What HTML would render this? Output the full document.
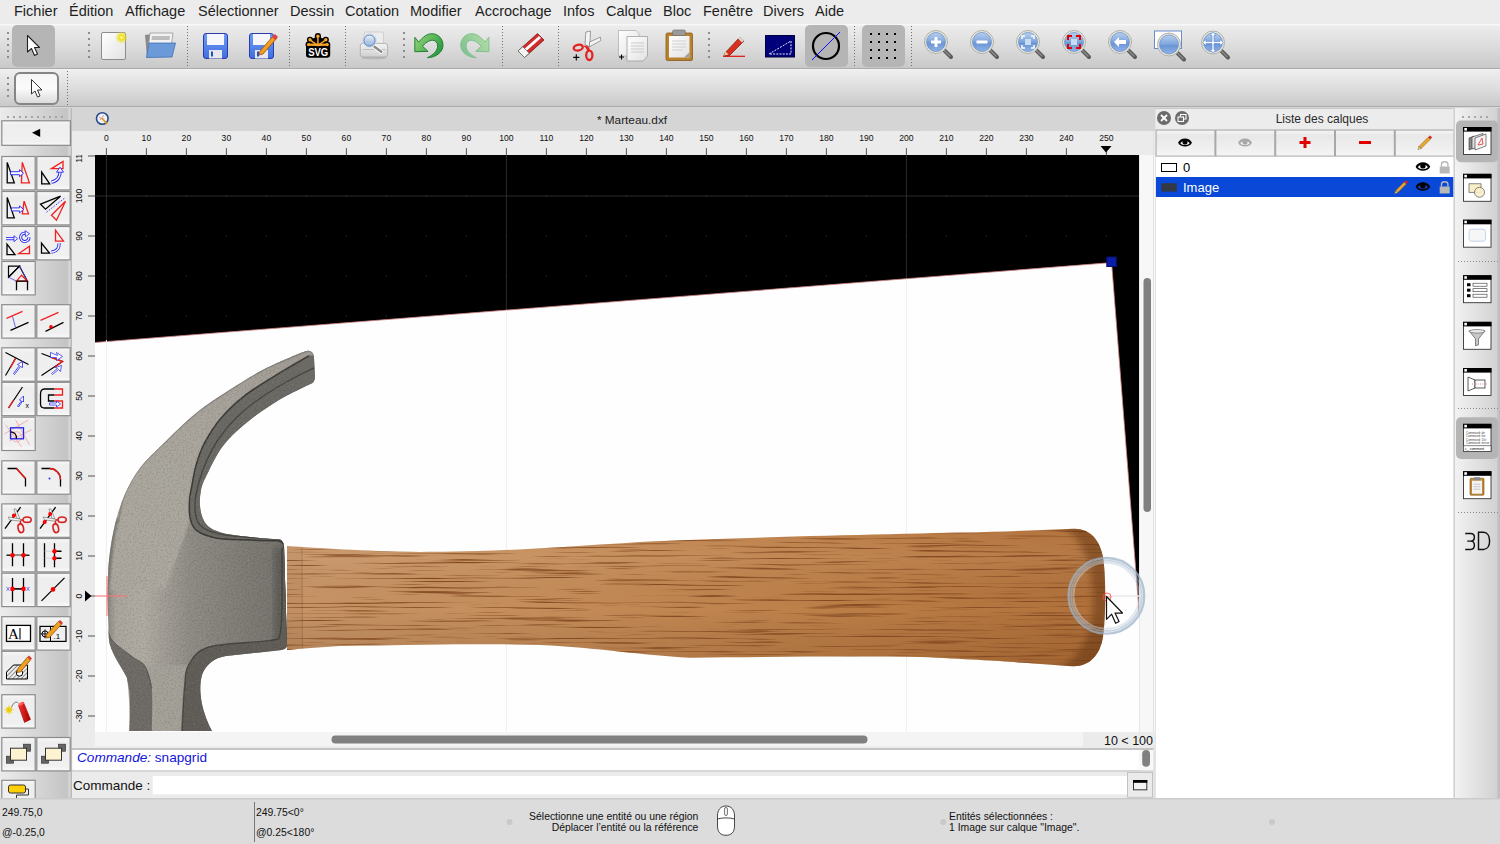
<!DOCTYPE html>
<html><head><meta charset="utf-8">
<style>
*{margin:0;padding:0;box-sizing:border-box}
html,body{width:1500px;height:844px;overflow:hidden;background:#e6e6e6;font-family:"Liberation Sans",sans-serif;color:#000}
.a{position:absolute}
#menu{left:0;top:0;width:1500px;height:24px;background:#ececec}
#menu span{position:absolute;top:3px;font-size:14.5px;color:#1e1e1e}
#tb1{left:0;top:24px;width:1500px;height:44.5px;background:linear-gradient(#f7f7f7 0,#f7f7f7 1px,#ececec 2px,#dcdcdc 50%,#c9c9c9 calc(100% - 1.5px),#ababab calc(100% - 1px),#ababab 100%)}
#tb2{left:0;top:68.5px;width:1500px;height:39.5px;background:linear-gradient(#f4f4f4 0,#eeeeee 1.5px,#dddddd 50%,#cacaca calc(100% - 2.5px),#a9a9a9 calc(100% - 2px),#a9a9a9 calc(100% - 1px),#d8d8d8 calc(100% - 1px))}
#left{left:0;top:108px;width:72px;height:690px;background:linear-gradient(90deg,#dedede,#d0d0d0)}
#tabhdr{left:72px;top:108px;width:1083px;height:23px;background:#d4d4d4}
#rulertop{left:72px;top:131px;width:1067px;height:24px;background:#ebebeb}
#rulerleft{left:72px;top:155px;width:23px;height:577px;background:#ebebeb}
#canvas{left:95px;top:155px;width:1044px;height:577px;background:#000;overflow:hidden}
#vscroll{left:1139px;top:131px;width:16px;height:615px;background:#f7f7f7;border-left:1px solid #e2e2e2}
#hscroll{left:72px;top:732px;width:1067px;height:14px;background:#f5f5f5}
#cmdhist{left:72px;top:746px;width:1083px;height:25px;background:#fff;border-top:3px solid #c9c9c9;border-bottom:1px solid #c0c0c0}
#cmdin{left:72px;top:771px;width:1083px;height:27px;background:#ebebeb}
#status{left:0;top:798px;width:1500px;height:46px;background:#dcdcdc;border-top:1px solid #cfcfcf}
#layers{left:1155px;top:108px;width:300px;height:690px;background:#fff}
#dock{left:1455px;top:108px;width:45px;height:690px;background:linear-gradient(90deg,#d6d6d6,#ececec)}
.sm{font-size:10px}
</style></head><body>
<div id="menu" class="a">
<span style="left:14px">Fichier</span>
<span style="left:69px">Édition</span>
<span style="left:125px">Affichage</span>
<span style="left:198px">Sélectionner</span>
<span style="left:290px">Dessin</span>
<span style="left:345px">Cotation</span>
<span style="left:410px">Modifier</span>
<span style="left:475px">Accrochage</span>
<span style="left:563px">Infos</span>
<span style="left:606px">Calque</span>
<span style="left:663px">Bloc</span>
<span style="left:703px">Fenêtre</span>
<span style="left:763px">Divers</span>
<span style="left:815px">Aide</span>
</div>
<div id="tb1" class="a"></div>
<div id="tb2" class="a"></div>
<svg class="a" style="left:0;top:0" width="1500" height="108" viewBox="0 0 1500 108">
<defs>
<linearGradient id="glass" x1="0" y1="0" x2="0" y2="1"><stop offset="0" stop-color="#b9d0ef"/><stop offset="0.5" stop-color="#7ea4dc"/><stop offset="0.55" stop-color="#6a94d4"/><stop offset="1" stop-color="#8fb3e6"/></linearGradient>
<linearGradient id="paper" x1="0" y1="0" x2="1" y2="1"><stop offset="0" stop-color="#ffffff"/><stop offset="1" stop-color="#e2e2e2"/></linearGradient>
<radialGradient id="glow"><stop offset="0" stop-color="#ffffc0"/><stop offset="0.35" stop-color="#f0e020"/><stop offset="1" stop-color="#f0e020" stop-opacity="0"/></radialGradient>
<linearGradient id="floppy" x1="0" y1="0" x2="0" y2="1"><stop offset="0" stop-color="#6f9cf5"/><stop offset="1" stop-color="#3f6fe0"/></linearGradient>
<linearGradient id="greenA" x1="0" y1="0" x2="1" y2="0.6"><stop offset="0" stop-color="#9ad878"/><stop offset="1" stop-color="#2a9a42"/></linearGradient>
<linearGradient id="greenB" x1="0" y1="0" x2="1" y2="0.6"><stop offset="0" stop-color="#b8e0a8"/><stop offset="1" stop-color="#80c290"/></linearGradient>
<linearGradient id="btn2" x1="0" y1="0" x2="0" y2="1"><stop offset="0" stop-color="#f4f4f4"/><stop offset="0.5" stop-color="#fbfbfb"/><stop offset="1" stop-color="#d9d9d9"/></linearGradient>
</defs>
<g fill="#8d8d8d"><rect x="7" y="32" width="2" height="2"/><rect x="7" y="38" width="2" height="2"/><rect x="7" y="44" width="2" height="2"/><rect x="7" y="50" width="2" height="2"/><rect x="7" y="56" width="2" height="2"/><rect x="88" y="32" width="2" height="2"/><rect x="88" y="38" width="2" height="2"/><rect x="88" y="44" width="2" height="2"/><rect x="88" y="50" width="2" height="2"/><rect x="88" y="56" width="2" height="2"/><rect x="403" y="32" width="2" height="2"/><rect x="403" y="38" width="2" height="2"/><rect x="403" y="44" width="2" height="2"/><rect x="403" y="50" width="2" height="2"/><rect x="403" y="56" width="2" height="2"/><rect x="708" y="32" width="2" height="2"/><rect x="708" y="38" width="2" height="2"/><rect x="708" y="44" width="2" height="2"/><rect x="708" y="50" width="2" height="2"/><rect x="708" y="56" width="2" height="2"/><rect x="7" y="77" width="2" height="2"/><rect x="7" y="83" width="2" height="2"/><rect x="7" y="89" width="2" height="2"/><rect x="7" y="95" width="2" height="2"/></g>
<g stroke="#707070" stroke-width="1" stroke-dasharray="1 2"><line x1="187.5" y1="26" x2="187.5" y2="67"/><line x1="289.5" y1="26" x2="289.5" y2="67"/><line x1="345.5" y1="26" x2="345.5" y2="67"/><line x1="502.5" y1="26" x2="502.5" y2="67"/><line x1="558.5" y1="26" x2="558.5" y2="67"/><line x1="854.5" y1="26" x2="854.5" y2="67"/><line x1="911.5" y1="26" x2="911.5" y2="67"/><line x1="67.5" y1="71" x2="67.5" y2="105"/></g>
<rect x="12" y="25" width="43" height="42" rx="5" fill="#b5b5b5"/>
<rect x="805" y="25" width="43" height="42" rx="5" fill="#b5b5b5"/>
<rect x="862" y="25" width="43" height="42" rx="5" fill="#b5b5b5"/>
<path d="M27.5,35.5 L27.5,52 L31.5,48.5 L34.5,55.5 L37.5,54 L34.5,47.5 L39.5,47.5 Z" fill="#fff" stroke="#222" stroke-width="1.1" stroke-linejoin="round"/>
<!-- new doc -->
<rect x="101.5" y="32.5" width="24" height="27" rx="1.5" fill="url(#paper)" stroke="#8c8c8c"/>
<circle cx="121.5" cy="37.5" r="6.5" fill="url(#glow)"/>
<!-- open folder -->
<path d="M145,35 L152,34 L154,36 L163,36 L163,57 L147,57 Z" fill="#8a8a8a"/>
<path d="M150,33 L173,33 L171,48 L148,50 Z" fill="#f2f2f2" stroke="#9a9a9a" stroke-width="0.8"/>
<path d="M152,36 L170,36 L169.5,40 L151.5,40 Z" fill="#bdbdbd"/>
<path d="M149,43 L175.5,43 L172,57 L146.5,57.5 Z" fill="#6c9ad8" stroke="#3f6fb8" stroke-width="0.8"/>
<!-- save -->
<rect x="203.5" y="33.5" width="24" height="25" rx="2.5" fill="url(#floppy)" stroke="#2b3ca8"/>
<rect x="207" y="34" width="17" height="11" fill="#f4f6fb"/>
<rect x="209" y="50" width="13" height="8.5" fill="#e6e8ee"/>
<rect x="211" y="51.5" width="2" height="5" fill="#2050c8"/>
<!-- save as -->
<rect x="249.5" y="33.5" width="24" height="25" rx="2.5" fill="url(#floppy)" stroke="#2b3ca8"/>
<rect x="253" y="34" width="17" height="11" fill="#f4f6fb"/>
<rect x="255" y="50" width="13" height="8.5" fill="#e6e8ee"/>
<rect x="257" y="51.5" width="2" height="5" fill="#2050c8"/>
<path d="M260,51 L274,35 L277,38 L263,54 L259,55 Z" fill="#f0a020" stroke="#a04a10" stroke-width="0.8"/>
<path d="M272,37 L275,34 L278,37 L275,40 Z" fill="#e04040"/>
<!-- SVG logo -->
<g fill="#000"><circle cx="317.9" cy="36.2" r="3.1"/><circle cx="310.0" cy="39.8" r="3.1"/><circle cx="325.8" cy="39.8" r="3.1"/><circle cx="308.6" cy="44.6" r="3.1"/><circle cx="327.2" cy="44.6" r="3.1"/><path d="M317.9,45.5 L317.9,36.2 L310,39.8 L308.6,44.6 L327.2,44.6 L325.8,39.8 L317.9,36.2 Z"/><rect x="306" y="42.5" width="24.2" height="15.2" rx="3.2"/></g>
<g stroke="#f7a428" stroke-width="1.5"><line x1="317.9" y1="45.5" x2="317.9" y2="36.2"/><line x1="317.9" y1="45.5" x2="310.0" y2="39.8"/><line x1="317.9" y1="45.5" x2="325.8" y2="39.8"/><line x1="317.9" y1="45.5" x2="308.6" y2="44.6"/><line x1="317.9" y1="45.5" x2="327.2" y2="44.6"/></g><g fill="#f7a428"><circle cx="317.9" cy="36.2" r="1.7"/><circle cx="310.0" cy="39.8" r="1.7"/><circle cx="325.8" cy="39.8" r="1.7"/><circle cx="308.6" cy="44.6" r="1.7"/><circle cx="327.2" cy="44.6" r="1.7"/><rect x="308.8" y="43.6" width="18.2" height="2"/></g>
<text x="0" y="0" font-family="Liberation Sans" font-weight="bold" font-size="11.6" fill="#fff" text-anchor="middle" transform="translate(318.2 56.4) scale(0.82 1)">SVG</text>
<!-- print preview -->
<defs><linearGradient id="prt" x1="0" y1="0" x2="0" y2="1"><stop offset="0" stop-color="#f4f4f4"/><stop offset="1" stop-color="#cfcfcf"/></linearGradient>
<linearGradient id="pglass" x1="0" y1="0" x2="0" y2="1"><stop offset="0" stop-color="#eef4fb"/><stop offset="0.6" stop-color="#b4c8e4"/><stop offset="1" stop-color="#9cb6da"/></linearGradient></defs>
<ellipse cx="374" cy="58" rx="13" ry="1.5" fill="#b8b8b8"/>
<rect x="364.3" y="32" width="19.2" height="13.5" rx="1" fill="#ececec" stroke="#c4c4c4" stroke-width="0.7"/>
<rect x="360.3" y="43.4" width="27.3" height="13.6" rx="2.5" fill="url(#prt)" stroke="#a6a6a6" stroke-width="0.8"/>
<path d="M362.5,49.5 L385.5,49.5" stroke="#c0c0c0" stroke-width="1"/>
<line x1="374.5" y1="46.7" x2="381.3" y2="51.8" stroke="#fff" stroke-width="4.2" stroke-linecap="round"/>
<line x1="374.5" y1="46.7" x2="381.3" y2="51.8" stroke="#8c8c8c" stroke-width="2.6" stroke-linecap="round"/>
<circle cx="369.5" cy="40.6" r="6.8" fill="#f4f4f4" stroke="#c8c8c8" stroke-width="0.6"/>
<circle cx="369.5" cy="40.6" r="5.6" fill="url(#pglass)" stroke="#4a80d0" stroke-width="1"/>
<!-- undo -->
<path d="M414.8,37.3 L418.7,42.1 C423,37 427,33.7 432,33.7 C438.5,33.7 443,39 443,45.4 C443,52 436,57.5 427.4,57.7 C433,55 437.6,51 437.6,46 C437.6,42.5 435.5,40.3 432.5,40.3 C429,40.3 425,43 422.6,46.3 L428,51.4 L414.8,51.7 Z" fill="url(#greenA)" stroke="#17782e" stroke-width="0.9" stroke-linejoin="round"/>
<!-- redo -->
<path transform="translate(903.7 0) scale(-1 1)" d="M414.8,37.3 L418.7,42.1 C423,37 427,33.7 432,33.7 C438.5,33.7 443,39 443,45.4 C443,52 436,57.5 427.4,57.7 C433,55 437.6,51 437.6,46 C437.6,42.5 435.5,40.3 432.5,40.3 C429,40.3 425,43 422.6,46.3 L428,51.4 L414.8,51.7 Z" fill="url(#greenB)" stroke="#7cbd8c" stroke-width="0.9" stroke-linejoin="round"/>
<!-- eraser -->
<ellipse cx="532" cy="57" rx="13" ry="1.6" fill="#d4d4d4"/>
<path d="M518,51 L537.5,33.5 L544,40 L524.5,57.5 Z" fill="#d42a2a" stroke="#7a1a1a" stroke-width="0.8"/>
<path d="M521.5,51.5 L539,36 L541,38 L523.5,53.5 Z" fill="#fff"/>
<path d="M518,51 L522.8,46.7 L529.3,53.2 L524.5,57.5 Z" fill="#f4f4f4" stroke="#666" stroke-width="0.8"/>
<!-- scissors -->
<path d="M585.8,32 L590.5,31 L589.8,46.8 L585,44.5 Z" fill="#f4f4f4" stroke="#7a7a7a" stroke-width="0.7"/>
<path d="M589.5,42 L600.4,37.2 L600.8,40.5 L589.5,46.8 Z" fill="#f4f4f4" stroke="#7a7a7a" stroke-width="0.7"/>
<ellipse cx="578.2" cy="47.6" rx="4.6" ry="2.9" fill="none" stroke="#e32222" stroke-width="2.3" transform="rotate(-12 578.2 47.6)"/>
<ellipse cx="589.3" cy="55.3" rx="3.1" ry="4.7" fill="none" stroke="#e32222" stroke-width="2.3"/>
<path d="M582.5,46 L587,45.5 L589.5,48 L589.5,50.8 L587.5,51 L585.5,47.5 Z" fill="#e32222"/>
<path d="M573.2,57.4 L579.4,57.4 M576.3,54.3 L576.3,60.5" stroke="#000" stroke-width="1.1"/>
<!-- copy -->
<path d="M618.5,30.5 L636,30.5 L639,33.5 L639,56 L618.5,56 Z" fill="url(#paper)" stroke="#b0b0b0" stroke-width="0.8"/>
<path d="M627,36.5 L647.5,36.5 L647.5,56 L643,61 L627,61 Z" fill="url(#paper)" stroke="#a0a0a0" stroke-width="0.8"/>
<g stroke="#c0c0c0" stroke-width="0.8"><line x1="631" y1="43" x2="644" y2="43"/><line x1="631" y1="46" x2="644" y2="46"/><line x1="631" y1="49" x2="644" y2="49"/><line x1="631" y1="52" x2="644" y2="52"/></g>
<path d="M619,57 L624,57 M621.5,54.5 L621.5,59.5" stroke="#000" stroke-width="1.1"/>
<!-- paste -->
<rect x="666" y="33" width="26.5" height="27.5" rx="1.5" fill="#b8822e" stroke="#8a5a1a" stroke-width="0.8"/>
<rect x="669" y="36" width="20.5" height="21.5" fill="url(#paper)"/>
<rect x="672.5" y="30" width="13" height="5.5" rx="1.5" fill="#9a9a9a" stroke="#6a6a6a" stroke-width="0.6"/>
<g stroke="#c8c8c8" stroke-width="0.8"><line x1="672" y1="41" x2="686" y2="41"/><line x1="672" y1="44" x2="686" y2="44"/><line x1="672" y1="47" x2="686" y2="47"/><line x1="672" y1="50" x2="683" y2="50"/></g>
<path d="M684,57.5 L689.5,52 L689.5,57.5 Z" fill="#a0a0a0"/>
<!-- pen -->
<line x1="723" y1="56.3" x2="745" y2="56.3" stroke="#e01010" stroke-width="1.2"/>
<path d="M725,53 L740,37 L744,41 L729,56 L724,55.5 Z" fill="#d83020" stroke="#8a2010" stroke-width="0.8"/>
<path d="M724,55.5 L725.5,51.5 L728.5,54.5 Z" fill="#f0d0a0"/>
<path d="M738,38.5 L740,36.5 L744,40.5 L742,42.5 Z" fill="#d8d8d8"/>
<!-- blue box -->
<rect x="765.5" y="35.5" width="29" height="21.5" fill="#00007a" stroke="#000040"/>
<path d="M769,54 L791,41 L791,54 Z" fill="none" stroke="#e8e8f8" stroke-width="1" stroke-dasharray="2 1.2"/>
<!-- circle w/ line -->
<circle cx="826" cy="46" r="13" fill="none" stroke="#000" stroke-width="2.2"/>
<line x1="812" y1="60" x2="840" y2="32" stroke="#1010ff" stroke-width="1"/>
<!-- grid -->
<g fill="#000"><rect x="870" y="33" width="2" height="2"/><rect x="870" y="41" width="2" height="2"/><rect x="870" y="49" width="2" height="2"/><rect x="870" y="57" width="2" height="2"/><rect x="878" y="33" width="2" height="2"/><rect x="878" y="41" width="2" height="2"/><rect x="878" y="49" width="2" height="2"/><rect x="878" y="57" width="2" height="2"/><rect x="886" y="33" width="2" height="2"/><rect x="886" y="41" width="2" height="2"/><rect x="886" y="49" width="2" height="2"/><rect x="886" y="57" width="2" height="2"/><rect x="894" y="33" width="2" height="2"/><rect x="894" y="41" width="2" height="2"/><rect x="894" y="49" width="2" height="2"/><rect x="894" y="57" width="2" height="2"/></g>
<!-- zooms -->
<g>
<line x1="943" y1="49" x2="951" y2="57" stroke="#5a5a5a" stroke-width="4" stroke-linecap="round"/>
<line x1="944" y1="50" x2="950" y2="56" stroke="#8a8a8a" stroke-width="1.5" stroke-linecap="round"/>
<circle cx="936" cy="42" r="11.5" fill="#e8e8e0" stroke="#b0b0a8" stroke-width="1"/>
<circle cx="936" cy="42" r="9.5" fill="url(#glass)" stroke="#6f93c8" stroke-width="0.8"/>
<path d="M931,42 L941,42 M936,37 L936,47" stroke="#fff" stroke-width="3"/></g>
<g>
<line x1="989" y1="49" x2="997" y2="57" stroke="#5a5a5a" stroke-width="4" stroke-linecap="round"/>
<line x1="990" y1="50" x2="996" y2="56" stroke="#8a8a8a" stroke-width="1.5" stroke-linecap="round"/>
<circle cx="982" cy="42" r="11.5" fill="#e8e8e0" stroke="#b0b0a8" stroke-width="1"/>
<circle cx="982" cy="42" r="9.5" fill="url(#glass)" stroke="#6f93c8" stroke-width="0.8"/>
<path d="M976.5,42 L987.5,42" stroke="#fff" stroke-width="3"/></g>
<g>
<line x1="1035" y1="49" x2="1043" y2="57" stroke="#5a5a5a" stroke-width="4" stroke-linecap="round"/>
<line x1="1036" y1="50" x2="1042" y2="56" stroke="#8a8a8a" stroke-width="1.5" stroke-linecap="round"/>
<circle cx="1028" cy="42" r="11.5" fill="#e8e8e0" stroke="#b0b0a8" stroke-width="1"/>
<circle cx="1028" cy="42" r="9.5" fill="url(#glass)" stroke="#6f93c8" stroke-width="0.8"/>
<g fill="none" stroke="#fff" stroke-width="1.5"><path d="M1022,39 L1022,36 L1025,36 M1031,36 L1034,36 L1034,39 M1034,45 L1034,48 L1031,48 M1025,48 L1022,48 L1022,45"/></g><rect x="1025" y="39" width="6" height="6" fill="#c8dcf4"/></g>
<g>
<line x1="1081" y1="49" x2="1089" y2="57" stroke="#5a5a5a" stroke-width="4" stroke-linecap="round"/>
<line x1="1082" y1="50" x2="1088" y2="56" stroke="#8a8a8a" stroke-width="1.5" stroke-linecap="round"/>
<circle cx="1074" cy="42" r="11.5" fill="#e8e8e0" stroke="#b0b0a8" stroke-width="1"/>
<circle cx="1074" cy="42" r="9.5" fill="url(#glass)" stroke="#6f93c8" stroke-width="0.8"/>
<g fill="none" stroke="#e00000" stroke-width="2"><path d="M1068,40 L1068,36 L1072,36 M1076,36 L1080,36 L1080,40 M1080,44 L1080,48 L1076,48 M1072,48 L1068,48 L1068,44"/></g><rect x="1071" y="39" width="6" height="6" fill="#c8dcf4"/></g>
<g>
<line x1="1127" y1="49" x2="1135" y2="57" stroke="#5a5a5a" stroke-width="4" stroke-linecap="round"/>
<line x1="1128" y1="50" x2="1134" y2="56" stroke="#8a8a8a" stroke-width="1.5" stroke-linecap="round"/>
<circle cx="1120" cy="42" r="11.5" fill="#e8e8e0" stroke="#b0b0a8" stroke-width="1"/>
<circle cx="1120" cy="42" r="9.5" fill="url(#glass)" stroke="#6f93c8" stroke-width="0.8"/>
<path d="M1114,42 L1119,37 L1119,40 L1126,40 L1126,44 L1119,44 L1119,47 Z" fill="#fff"/></g>
<rect x="1154.5" y="31" width="27" height="17.5" fill="#fff" stroke="#6a8cc8"/>
<g>
<line x1="1176" y1="51.5" x2="1184" y2="59.5" stroke="#5a5a5a" stroke-width="4" stroke-linecap="round"/>
<line x1="1177" y1="52.5" x2="1183" y2="58.5" stroke="#8a8a8a" stroke-width="1.5" stroke-linecap="round"/>
<circle cx="1169" cy="44.5" r="11.5" fill="#e8e8e0" stroke="#b0b0a8" stroke-width="1"/>
<circle cx="1169" cy="44.5" r="9.5" fill="url(#glass)" stroke="#6f93c8" stroke-width="0.8"/>
</g>
<g>
<line x1="1220" y1="49.5" x2="1228" y2="57.5" stroke="#5a5a5a" stroke-width="4" stroke-linecap="round"/>
<line x1="1221" y1="50.5" x2="1227" y2="56.5" stroke="#8a8a8a" stroke-width="1.5" stroke-linecap="round"/>
<circle cx="1213" cy="42.5" r="11.5" fill="#e8e8e0" stroke="#b0b0a8" stroke-width="1"/>
<circle cx="1213" cy="42.5" r="9.5" fill="url(#glass)" stroke="#6f93c8" stroke-width="0.8"/>
<path d="M1213,32 L1210,35.5 L1212,35.5 L1212,41.5 L1206,41.5 L1206,39.5 L1202.5,42.5 L1206,45.5 L1206,43.5 L1212,43.5 L1212,49.5 L1210,49.5 L1213,53 L1216,49.5 L1214,49.5 L1214,43.5 L1220,43.5 L1220,45.5 L1223.5,42.5 L1220,39.5 L1220,41.5 L1214,41.5 L1214,35.5 L1216,35.5 Z" fill="#fff" stroke="#5a8ad0" stroke-width="0.6"/></g>
<!-- toolbar2 button -->
<rect x="15" y="73" width="43" height="31" rx="5" fill="url(#btn2)" stroke="#858585" stroke-width="2"/>
<path d="M31.5,79.5 L31.5,94 L35,91 L37.5,97 L40,96 L37.5,90 L42,90 Z" fill="#fff" stroke="#333" stroke-width="1" stroke-linejoin="round"/>
</svg>
<!--LEFT--><svg class="a" style="left:0;top:108px" width="72" height="690" viewBox="0 108 72 690">
<defs><linearGradient id="lbtn" x1="0" y1="0" x2="0" y2="1"><stop offset="0" stop-color="#f8f8f8"/><stop offset="0.15" stop-color="#eeeeee"/><stop offset="0.85" stop-color="#f0f0f0"/><stop offset="1" stop-color="#fafafa"/></linearGradient><linearGradient id="lpan" x1="0" y1="0" x2="1" y2="0"><stop offset="0" stop-color="#ececec"/><stop offset="0.93" stop-color="#c4c4c4"/><stop offset="0.97" stop-color="#d8d8d8"/><stop offset="1" stop-color="#b0b0b0"/></linearGradient></defs>
<rect x="0" y="108" width="72" height="690" fill="url(#lpan)"/>
<g fill="#a4a4a4"><rect x="7" y="116" width="2" height="2"/><rect x="13" y="116" width="2" height="2"/><rect x="19" y="116" width="2" height="2"/><rect x="25" y="116" width="2" height="2"/><rect x="31" y="116" width="2" height="2"/><rect x="37" y="116" width="2" height="2"/><rect x="43" y="116" width="2" height="2"/><rect x="49" y="116" width="2" height="2"/><rect x="55" y="116" width="2" height="2"/><rect x="61" y="116" width="2" height="2"/></g>
<rect x="1.8" y="120.8" width="68.6" height="24.5" fill="url(#lbtn)" stroke="#8a8a8a" stroke-width="1.2"/>
<path d="M32,132.8 L40.2,128.8 L40.2,137 Z" fill="#000"/>
<rect x="1.8" y="156.5" width="33.4" height="33.4" fill="url(#lbtn)" stroke="#8c8c8c" stroke-width="1.2"/>
<g transform="translate(1.5,156.2)"><path d="M5.7,6.2 L5.7,26.7 L12.8,26.7 Z" fill="none" stroke="#000" stroke-width="1.3"/><path d="M20.8,6.2 L19.9,26.7 L27.9,26.7 Z" fill="none" stroke="#f02020" stroke-width="1.3"/><path d="M9,15.5 L18,15.5 L18,13.5 L22,17 L18,20.5 L18,18.5 L9,18.5 Z" fill="#fff" stroke="#2020f0" stroke-width="0.9"/></g>
<rect x="36.8" y="156.5" width="33.4" height="33.4" fill="url(#lbtn)" stroke="#8c8c8c" stroke-width="1.2"/>
<g transform="translate(36.5,156.2)"><path d="M5.2,16 L5.2,27.6 L13.2,27.6 Z" fill="none" stroke="#000" stroke-width="1.3"/><path d="M15,12.4 L26.5,5.3 L26.5,12.4 Z" fill="none" stroke="#f02020" stroke-width="1.3"/><path d="M15,26 C21,25 24,20 23.5,15" fill="none" stroke="#2020f0" stroke-width="3.2"/><path d="M15,26 C21,25 24,20 23.5,15" fill="none" stroke="#fff" stroke-width="1.4"/><path d="M20,16 L23.5,11 L27,16 Z" fill="#fff" stroke="#2020f0" stroke-width="0.9"/></g>
<rect x="1.8" y="191.5" width="33.4" height="33.4" fill="url(#lbtn)" stroke="#8c8c8c" stroke-width="1.2"/>
<g transform="translate(1.5,191.2)"><path d="M5.7,6.2 L5.7,26.7 L12.8,26.7 Z" fill="none" stroke="#000" stroke-width="1.3"/><path d="M22.6,10 L20.8,22.6 L27,22.6 Z" fill="none" stroke="#f02020" stroke-width="1.3"/><path d="M10,16.7 L18,16.7 L18,14.7 L22,18.2 L18,21.7 L18,19.7 L10,19.7 Z" fill="#fff" stroke="#2020f0" stroke-width="0.9"/></g>
<rect x="36.8" y="191.5" width="33.4" height="33.4" fill="url(#lbtn)" stroke="#8c8c8c" stroke-width="1.2"/>
<g transform="translate(36.5,191.2)"><path d="M4,13 L24,5 L9,18 Z" fill="none" stroke="#000" stroke-width="1.3"/><path d="M15,24 L29,10 L20,29 Z" fill="none" stroke="#f02020" stroke-width="1.3"/><line x1="10" y1="21" x2="28" y2="7" stroke="#2020f0" stroke-width="0.9" stroke-dasharray="1.5 1.5"/></g>
<rect x="1.8" y="226.5" width="33.4" height="33.4" fill="url(#lbtn)" stroke="#8c8c8c" stroke-width="1.2"/>
<g transform="translate(1.5,226.2)"><path d="M5.5,18 L5.5,28.5 L13.5,28.5 Z" fill="none" stroke="#000" stroke-width="1.3"/><path d="M17,27.5 L28,20 L28,27.5 Z" fill="none" stroke="#f02020" stroke-width="1.3"/><path d="M4.5,12.5 L12.5,12.5" stroke="#2020f0" stroke-width="3"/><path d="M4.5,12.5 L12.5,12.5" stroke="#fff" stroke-width="1.2"/><path d="M12.5,9.5 L16,12.5 L12.5,15.5 Z" fill="#fff" stroke="#2020f0" stroke-width="0.8"/><path d="M27.5,11 A4.2,4.2 0 1 1 24,7" fill="none" stroke="#2020f0" stroke-width="3"/><path d="M27.5,11 A4.2,4.2 0 1 1 24,7" fill="none" stroke="#fff" stroke-width="1.2"/><path d="M23.5,4.5 L28,7.5 L24,10.5 Z" fill="#fff" stroke="#2020f0" stroke-width="0.8"/></g>
<rect x="36.8" y="226.5" width="33.4" height="33.4" fill="url(#lbtn)" stroke="#8c8c8c" stroke-width="1.2"/>
<g transform="translate(36.5,226.2)"><path d="M5,17 L5,27 L13,27 Z" fill="none" stroke="#000" stroke-width="1.3"/><path d="M19,4 L19,15 L27,15 Z" fill="none" stroke="#f02020" stroke-width="1.3"/><path d="M15,26 C21,25 23,21 22.5,17" fill="none" stroke="#2020f0" stroke-width="3.2"/><path d="M15,26 C21,25 23,21 22.5,17" fill="none" stroke="#fff" stroke-width="1.4"/></g>
<rect x="1.8" y="261.5" width="33.4" height="33.4" fill="url(#lbtn)" stroke="#8c8c8c" stroke-width="1.2"/>
<g transform="translate(1.5,261.2)"><path d="M7,5 L18,5 L7,16 Z" fill="none" stroke="#000" stroke-width="1.2"/><path d="M18,5 L7,16 L18,5 L26,20" fill="none" stroke="#000" stroke-width="1.2"/><path d="M7,16 L15,20 M18,5 L26,20" stroke="#4040e0" stroke-width="0.8"/><path d="M15,20 L20,14 L26,20 Z" fill="none" stroke="#f02020" stroke-width="1.3"/><path d="M15,20 L26,20 M15,20 L15,29 M26,20 L26,29" stroke="#000" stroke-width="1.3"/></g>
<rect x="1.8" y="304.7" width="33.4" height="33.4" fill="url(#lbtn)" stroke="#8c8c8c" stroke-width="1.2"/>
<g transform="translate(1.5,304.4)"><line x1="5" y1="14" x2="21" y2="7" stroke="#f02020" stroke-width="1.2"/><line x1="9" y1="26" x2="27" y2="18" stroke="#000" stroke-width="1.2"/><line x1="11" y1="12" x2="14" y2="23" stroke="#4040e0" stroke-width="0.8"/></g>
<rect x="36.8" y="304.7" width="33.4" height="33.4" fill="url(#lbtn)" stroke="#8c8c8c" stroke-width="1.2"/>
<g transform="translate(36.5,304.4)"><line x1="4" y1="16" x2="22" y2="8" stroke="#f02020" stroke-width="1.2"/><line x1="9" y1="27" x2="27" y2="18" stroke="#000" stroke-width="1.2"/><circle cx="14.5" cy="22.5" r="1.8" fill="#f00"/></g>
<rect x="1.8" y="347.8" width="33.4" height="33.4" fill="url(#lbtn)" stroke="#8c8c8c" stroke-width="1.2"/>
<g transform="translate(1.5,347.5)"><line x1="4" y1="5" x2="27" y2="17" stroke="#000" stroke-width="1.2"/><line x1="4" y1="28" x2="14" y2="11" stroke="#000" stroke-width="1.2"/><line x1="9" y1="20" x2="14" y2="11" stroke="#f02020" stroke-width="1.4"/><path d="M12,26 L18,18 L16,17 L21,14 L21,20 L19,19 L13,27 Z" fill="#fff" stroke="#2020f0" stroke-width="0.8"/></g>
<rect x="36.8" y="347.8" width="33.4" height="33.4" fill="url(#lbtn)" stroke="#8c8c8c" stroke-width="1.2"/>
<g transform="translate(36.5,347.5)"><path d="M5,6 L26,14 L5,28" fill="none" stroke="#000" stroke-width="1.2"/><path d="M15,10 L26,14 L18,20" fill="none" stroke="#f02020" stroke-width="1.4"/><path d="M14,5 L21,8 L20,5 L26,9 L20,13 L20,10 L14,10 Z" fill="#fff" stroke="#2020f0" stroke-width="0.7"/><path d="M15,26 L21,21 L19,20 L25,18 L24,24 L22,22 L16,27 Z" fill="#fff" stroke="#2020f0" stroke-width="0.7"/></g>
<rect x="1.8" y="382.3" width="33.4" height="33.4" fill="url(#lbtn)" stroke="#8c8c8c" stroke-width="1.2"/>
<g transform="translate(1.5,382)"><line x1="21" y1="5" x2="7" y2="26" stroke="#000" stroke-width="1.2"/><line x1="12" y1="18" x2="7" y2="26" stroke="#f02020" stroke-width="1.4"/><path d="M16,24 L20,19 L18,18 L22,14 L22,20 L21,19 L17,25 Z" fill="#fff" stroke="#2020f0" stroke-width="0.8"/><text x="24" y="26" font-family="Liberation Sans" font-size="7" fill="#000">x</text></g>
<rect x="36.8" y="382.3" width="33.4" height="33.4" fill="url(#lbtn)" stroke="#8c8c8c" stroke-width="1.2"/>
<g transform="translate(36.5,382)"><path d="M18,7 L8,7 C5,7 4,9 4,12 L4,22 C4,25 5,26 8,26 L18,26 M18,13 L12,13 L12,19 L18,19" fill="none" stroke="#000" stroke-width="1.3"/><path d="M18,7 L26,7 L26,13 L18,13 M18,19 L26,19 L26,26 L18,26" fill="none" stroke="#f02020" stroke-width="1.3"/><path d="M13,21 L20,21 L20,19 L24,22 L20,25 L20,23 L13,23 Z" fill="#fff" stroke="#2020f0" stroke-width="0.7"/></g>
<rect x="1.8" y="417.1" width="33.4" height="33.4" fill="url(#lbtn)" stroke="#8c8c8c" stroke-width="1.2"/>
<g transform="translate(1.5,416.8)"><g stroke="#f0a0a0" stroke-width="0.8"><line x1="3" y1="17" x2="27" y2="3"/><line x1="8" y1="24" x2="30" y2="13"/><line x1="14" y1="3" x2="28" y2="28"/><line x1="4" y1="8" x2="20" y2="30"/><circle cx="15" cy="20" r="5" fill="none"/></g><rect x="9" y="11" width="13" height="11" fill="none" stroke="#2020f0" stroke-width="1.3"/><path d="M9,15 C13,15 15,17 15,22" fill="none" stroke="#000" stroke-width="1.2"/></g>
<rect x="1.8" y="460.8" width="33.4" height="33.4" fill="url(#lbtn)" stroke="#8c8c8c" stroke-width="1.2"/>
<g transform="translate(1.5,460.5)"><path d="M6,8 L15,8 L24,18 L24,26" fill="none" stroke="#000" stroke-width="1.3"/><line x1="15" y1="8" x2="24" y2="18" stroke="#f02020" stroke-width="1.4"/></g>
<rect x="36.8" y="460.8" width="33.4" height="33.4" fill="url(#lbtn)" stroke="#8c8c8c" stroke-width="1.2"/>
<g transform="translate(36.5,460.5)"><path d="M5,8 L13,8 C19,8 24,13 24,19 L24,26" fill="none" stroke="#000" stroke-width="1.3"/><path d="M13,8 C19,8 24,13 24,19" fill="none" stroke="#f02020" stroke-width="1.4"/><circle cx="13" cy="18" r="0.9" fill="#2020f0"/></g>
<rect x="1.8" y="503.90000000000003" width="33.4" height="33.4" fill="url(#lbtn)" stroke="#8c8c8c" stroke-width="1.2"/>
<g transform="translate(1.5,503.6)"><line x1="3.5" y1="25" x2="19.1" y2="3.6" stroke="#000" stroke-width="1.3"/><path d="M12.4,5.5 L14.3,5.3 L18.4,15.2 L15.6,14.8 Z" fill="#f4f4f4" stroke="#666" stroke-width="0.6"/><path d="M6.7,13.4 L18.7,15.4 L19.3,17.6 L8.1,16.3 Z" fill="#f4f4f4" stroke="#666" stroke-width="0.6"/><path d="M19,16.3 L21.5,16.3 M18.8,17.5 L19.2,20.5" stroke="#d82020" stroke-width="1.5"/><ellipse cx="25.6" cy="16.1" rx="4.1" ry="2.7" fill="none" stroke="#d82020" stroke-width="1.6"/><ellipse cx="19.3" cy="24.6" rx="2.7" ry="4.4" fill="none" stroke="#d82020" stroke-width="1.6" transform="rotate(-12 19.3 24.6)"/><circle cx="12.4" cy="12" r="2" fill="#f00"/></g>
<rect x="36.8" y="503.90000000000003" width="33.4" height="33.4" fill="url(#lbtn)" stroke="#8c8c8c" stroke-width="1.2"/>
<g transform="translate(36.5,503.6)"><line x1="3.5" y1="25" x2="19.1" y2="3.6" stroke="#000" stroke-width="1.3"/><path d="M12.4,5.5 L14.3,5.3 L18.4,15.2 L15.6,14.8 Z" fill="#f4f4f4" stroke="#666" stroke-width="0.6"/><path d="M6.7,13.4 L18.7,15.4 L19.3,17.6 L8.1,16.3 Z" fill="#f4f4f4" stroke="#666" stroke-width="0.6"/><path d="M19,16.3 L21.5,16.3 M18.8,17.5 L19.2,20.5" stroke="#d82020" stroke-width="1.5"/><ellipse cx="25.6" cy="16.1" rx="4.1" ry="2.7" fill="none" stroke="#d82020" stroke-width="1.6"/><ellipse cx="19.3" cy="24.6" rx="2.7" ry="4.4" fill="none" stroke="#d82020" stroke-width="1.6" transform="rotate(-12 19.3 24.6)"/><circle cx="13.7" cy="10.3" r="2" fill="#f00"/><circle cx="8.2" cy="18.5" r="2" fill="#f00"/></g>
<rect x="1.8" y="538.5" width="33.4" height="33.4" fill="url(#lbtn)" stroke="#8c8c8c" stroke-width="1.2"/>
<g transform="translate(1.5,538.2)"><path d="M5,17 L28,17" stroke="#000" stroke-width="1.3"/><path d="M11,5 L11,28 M22,5 L22,28" stroke="#000" stroke-width="1.3"/><line x1="11" y1="17" x2="22" y2="17" stroke="#bbb" stroke-width="1"/><circle cx="11" cy="17" r="2.3" fill="#f00"/><circle cx="22" cy="17" r="2.3" fill="#f00"/></g>
<rect x="36.8" y="538.5" width="33.4" height="33.4" fill="url(#lbtn)" stroke="#8c8c8c" stroke-width="1.2"/>
<g transform="translate(36.5,538.2)"><path d="M8,5 L8,29 M18,5 L18,29" stroke="#000" stroke-width="1.3"/><path d="M18,13 L25,13 M18,20 L25,20" stroke="#000" stroke-width="1.6"/><path d="M8,13 L18,13 M8,20 L18,20" stroke="#aaa" stroke-width="0.8" stroke-dasharray="1 1"/><circle cx="18" cy="13" r="2.2" fill="#f00"/><circle cx="18" cy="20" r="2.2" fill="#f00"/></g>
<rect x="1.8" y="573.1999999999999" width="33.4" height="33.4" fill="url(#lbtn)" stroke="#8c8c8c" stroke-width="1.2"/>
<g transform="translate(1.5,572.9)"><path d="M11,5 L11,29 M22,5 L22,29" stroke="#000" stroke-width="1.3"/><path d="M11,16 L22,16" stroke="#000" stroke-width="1.6"/><circle cx="11" cy="16" r="2.3" fill="#f00"/><circle cx="22" cy="16" r="2.3" fill="#f00"/><path d="M5,14 L8,18 M5,18 L8,14 M25,14 L28,18 M25,18 L28,14" stroke="#6060f0" stroke-width="0.8"/></g>
<rect x="36.8" y="573.1999999999999" width="33.4" height="33.4" fill="url(#lbtn)" stroke="#8c8c8c" stroke-width="1.2"/>
<g transform="translate(36.5,572.9)"><line x1="5" y1="28" x2="28" y2="5" stroke="#000" stroke-width="1.2"/><circle cx="16.5" cy="16.5" r="2.3" fill="#f00"/></g>
<rect x="1.8" y="616.6999999999999" width="33.4" height="33.4" fill="url(#lbtn)" stroke="#8c8c8c" stroke-width="1.2"/>
<g transform="translate(1.5,616.4)"><rect x="5" y="9" width="24" height="16" fill="#fff" stroke="#000" stroke-width="1.3"/><text x="6.5" y="23" font-family="Liberation Serif" font-size="15" fill="#000">A</text><line x1="18.5" y1="11.5" x2="18.5" y2="23" stroke="#000" stroke-width="1.1"/></g>
<rect x="36.8" y="616.6999999999999" width="33.4" height="33.4" fill="url(#lbtn)" stroke="#8c8c8c" stroke-width="1.2"/>
<g transform="translate(36.5,616.4)"><rect x="3.5" y="10" width="26" height="15" fill="none" stroke="#000" stroke-width="1.2"/><line x1="14" y1="10" x2="14" y2="25" stroke="#000" stroke-width="1"/><circle cx="8.5" cy="17.5" r="3" fill="none" stroke="#000" stroke-width="1"/><path d="M4,17.5 L13,17.5 M8.5,13 L8.5,22" stroke="#000" stroke-width="0.9"/><text x="17" y="23" font-family="Liberation Sans" font-size="8" fill="#000">.1</text><path d="M10,18 L22,5 L25,8 L13,21 L9.5,21.5 Z" fill="#f0a020" stroke="#8a4a10" stroke-width="0.7"/><path d="M22,5 L23.5,3.5 L26.5,6.5 L25,8 Z" fill="#e03030"/></g>
<rect x="1.8" y="651.3" width="33.4" height="33.4" fill="url(#lbtn)" stroke="#8c8c8c" stroke-width="1.2"/>
<g transform="translate(1.5,651)"><defs><pattern id="hatch" width="3" height="3" patternUnits="userSpaceOnUse" patternTransform="rotate(45)"><line x1="0" y1="0" x2="0" y2="3" stroke="#000" stroke-width="0.8"/></pattern></defs><path d="M5,21 L12,14 L26,14 L26,28 L5,28 Z" fill="url(#hatch)" stroke="#000" stroke-width="1"/><circle cx="18" cy="22" r="3.2" fill="#fff" stroke="#000" stroke-width="1"/><path d="M16,18 L26,6 L29,9 L19,21 L15.5,21.5 Z" fill="#f0a020" stroke="#8a4a10" stroke-width="0.7"/><path d="M26,6 L27.5,4.5 L30.5,7.5 L29,9 Z" fill="#e03030"/></g>
<rect x="1.8" y="694.6999999999999" width="33.4" height="33.4" fill="url(#lbtn)" stroke="#8c8c8c" stroke-width="1.2"/>
<g transform="translate(1.5,694.4)"><defs><linearGradient id="dyn" x1="0" y1="0" x2="1" y2="0"><stop offset="0" stop-color="#ff3030"/><stop offset="1" stop-color="#9a0000"/></linearGradient></defs><path d="M9,16 C11,8 15,6 17,9" fill="none" stroke="#777" stroke-width="1"/><path d="M17,11 L22,8 L29,25 L23,28 Z" fill="url(#dyn)" stroke="#a00" stroke-width="0.6"/><ellipse cx="19.5" cy="9.5" rx="3" ry="1.5" fill="#ff6060" transform="rotate(-28 19.5 9.5)"/><circle cx="7.5" cy="15.5" r="2.8" fill="#ffe020"/><g stroke="#e0c000" stroke-width="0.7"><line x1="3" y1="15.5" x2="12" y2="15.5"/><line x1="7.5" y1="11" x2="7.5" y2="20"/><line x1="4.5" y1="12.5" x2="10.5" y2="18.5"/><line x1="4.5" y1="18.5" x2="10.5" y2="12.5"/></g></g>
<rect x="1.8" y="737.5" width="33.4" height="33.4" fill="url(#lbtn)" stroke="#8c8c8c" stroke-width="1.2"/>
<g transform="translate(1.5,737.2)"><rect x="5" y="19" width="7" height="7" fill="#666" stroke="#333" stroke-width="0.7"/><rect x="22" y="7" width="7" height="7" fill="#666" stroke="#333" stroke-width="0.7"/><rect x="9" y="11" width="16" height="12" fill="#fdf3d0" stroke="#333" stroke-width="1"/></g>
<rect x="36.8" y="737.5" width="33.4" height="33.4" fill="url(#lbtn)" stroke="#8c8c8c" stroke-width="1.2"/>
<g transform="translate(36.5,737.2)"><rect x="5" y="19" width="7" height="7" fill="#666" stroke="#333" stroke-width="0.7"/><rect x="22" y="7" width="7" height="7" fill="#666" stroke="#333" stroke-width="0.7"/><rect x="9" y="11" width="16" height="12" fill="#fdf3d0" stroke="#333" stroke-width="1"/></g>
<rect x="1.8" y="780.3" width="33.4" height="33.4" fill="url(#lbtn)" stroke="#8c8c8c" stroke-width="1.2"/>
<g transform="translate(1.5,780)"><rect x="7" y="5" width="17" height="8" rx="2" fill="#ffd000" stroke="#333" stroke-width="1"/><path d="M24,9 L27,9 L27,15 L15,15 L15,18" fill="none" stroke="#333" stroke-width="1"/></g>
</svg><!--/LEFT-->
<!--CANVAS--><svg class="a" style="left:72px;top:108px" width="1083" height="640" viewBox="72 108 1083 640">
<defs>
<clipPath id="cv"><rect x="95" y="155" width="1044" height="577"/></clipPath>
<linearGradient id="wood" x1="0" y1="0" x2="0" y2="1"><stop offset="0" stop-color="#c08250"/><stop offset="0.12" stop-color="#cf9560"/><stop offset="0.5" stop-color="#c48a55"/><stop offset="0.85" stop-color="#b57840"/><stop offset="1" stop-color="#9a6030"/></linearGradient>
<linearGradient id="woodH" x1="0" y1="0" x2="1" y2="0"><stop offset="0" stop-color="#000" stop-opacity="0"/><stop offset="0.45" stop-color="#7a3a10" stop-opacity="0.05"/><stop offset="0.9" stop-color="#7a3a10" stop-opacity="0.18"/><stop offset="1" stop-color="#5a2a08" stop-opacity="0.4"/></linearGradient>
<linearGradient id="steel" gradientUnits="userSpaceOnUse" x1="107" y1="0" x2="290" y2="0"><stop offset="0" stop-color="#8a8780"/><stop offset="0.05" stop-color="#aaa69e"/><stop offset="0.2" stop-color="#b0aca4"/><stop offset="0.45" stop-color="#908c86"/><stop offset="0.75" stop-color="#7f7c76"/><stop offset="0.95" stop-color="#76736e"/><stop offset="1" stop-color="#55534f"/></linearGradient>
<linearGradient id="woodX" gradientUnits="userSpaceOnUse" x1="287" y1="0" x2="1105" y2="0"><stop offset="0" stop-color="#c69467"/><stop offset="0.3" stop-color="#c58d5a"/><stop offset="0.65" stop-color="#bc7f48"/><stop offset="1" stop-color="#b0703a"/></linearGradient>
<linearGradient id="woodV" x1="0" y1="0" x2="0" y2="1"><stop offset="0" stop-color="#fff" stop-opacity="0"/><stop offset="0.25" stop-color="#fff" stop-opacity="0.06"/><stop offset="0.6" stop-color="#000" stop-opacity="0"/><stop offset="0.9" stop-color="#4a2000" stop-opacity="0.12"/><stop offset="1" stop-color="#4a2000" stop-opacity="0.2"/></linearGradient>
<linearGradient id="steelV" x1="0" y1="0" x2="0" y2="1"><stop offset="0" stop-color="#8e8c86"/><stop offset="1" stop-color="#6e6c67"/></linearGradient>
<linearGradient id="claw" x1="0" y1="1" x2="1" y2="0"><stop offset="0" stop-color="#8d8b85"/><stop offset="0.4" stop-color="#a09e98"/><stop offset="1" stop-color="#8a8883"/></linearGradient>
<radialGradient id="ring" cx="0.5" cy="0.5" r="0.5"><stop offset="0.82" stop-color="#a8bccc" stop-opacity="0"/><stop offset="0.88" stop-color="#9ab0c4" stop-opacity="0.75"/><stop offset="0.94" stop-color="#b8c8d6" stop-opacity="0.8"/><stop offset="1" stop-color="#b8c8d6" stop-opacity="0"/></radialGradient>
</defs>
<rect x="72" y="108" width="1083" height="23" fill="#d5d5d5"/>
<circle cx="102.3" cy="118.5" r="5.8" fill="#eef2f8" stroke="#2a4a8a" stroke-width="1.6"/><path d="M99,117 L105,121 M100,120 L104,115" stroke="#c04040" stroke-width="0.5"/><path d="M102,118 L107,124" stroke="#e0a020" stroke-width="1.8"/>
<text x="632" y="124" font-family="Liberation Sans" font-size="11.8" fill="#222" text-anchor="middle">* Marteau.dxf</text>
<rect x="72" y="131" width="1083" height="24" fill="#ebebeb"/>
<rect x="72" y="155" width="23" height="577" fill="#ebebeb"/>
<g stroke="#555" stroke-width="1"><line x1="106.4" y1="148" x2="106.4" y2="155"/><line x1="146.4" y1="148" x2="146.4" y2="155"/><line x1="186.4" y1="148" x2="186.4" y2="155"/><line x1="226.4" y1="148" x2="226.4" y2="155"/><line x1="266.4" y1="148" x2="266.4" y2="155"/><line x1="306.4" y1="148" x2="306.4" y2="155"/><line x1="346.4" y1="148" x2="346.4" y2="155"/><line x1="386.4" y1="148" x2="386.4" y2="155"/><line x1="426.4" y1="148" x2="426.4" y2="155"/><line x1="466.4" y1="148" x2="466.4" y2="155"/><line x1="506.4" y1="148" x2="506.4" y2="155"/><line x1="546.4" y1="148" x2="546.4" y2="155"/><line x1="586.4" y1="148" x2="586.4" y2="155"/><line x1="626.4" y1="148" x2="626.4" y2="155"/><line x1="666.4" y1="148" x2="666.4" y2="155"/><line x1="706.4" y1="148" x2="706.4" y2="155"/><line x1="746.4" y1="148" x2="746.4" y2="155"/><line x1="786.4" y1="148" x2="786.4" y2="155"/><line x1="826.4" y1="148" x2="826.4" y2="155"/><line x1="866.4" y1="148" x2="866.4" y2="155"/><line x1="906.4" y1="148" x2="906.4" y2="155"/><line x1="946.4" y1="148" x2="946.4" y2="155"/><line x1="986.4" y1="148" x2="986.4" y2="155"/><line x1="1026.4" y1="148" x2="1026.4" y2="155"/><line x1="1066.4" y1="148" x2="1066.4" y2="155"/><line x1="1106.4" y1="148" x2="1106.4" y2="155"/><line x1="88" y1="716" x2="95" y2="716"/><line x1="88" y1="676" x2="95" y2="676"/><line x1="88" y1="636" x2="95" y2="636"/><line x1="88" y1="596" x2="95" y2="596"/><line x1="88" y1="556" x2="95" y2="556"/><line x1="88" y1="516" x2="95" y2="516"/><line x1="88" y1="476" x2="95" y2="476"/><line x1="88" y1="436" x2="95" y2="436"/><line x1="88" y1="396" x2="95" y2="396"/><line x1="88" y1="356" x2="95" y2="356"/><line x1="88" y1="316" x2="95" y2="316"/><line x1="88" y1="276" x2="95" y2="276"/><line x1="88" y1="236" x2="95" y2="236"/><line x1="88" y1="196" x2="95" y2="196"/><line x1="88" y1="156" x2="95" y2="156"/></g>
<clipPath id="rl"><rect x="72" y="155" width="23" height="577"/></clipPath>
<g font-family="Liberation Sans" font-size="8.6" fill="#111"><text x="106.4" y="140.8" text-anchor="middle">0</text><text x="146.4" y="140.8" text-anchor="middle">10</text><text x="186.4" y="140.8" text-anchor="middle">20</text><text x="226.4" y="140.8" text-anchor="middle">30</text><text x="266.4" y="140.8" text-anchor="middle">40</text><text x="306.4" y="140.8" text-anchor="middle">50</text><text x="346.4" y="140.8" text-anchor="middle">60</text><text x="386.4" y="140.8" text-anchor="middle">70</text><text x="426.4" y="140.8" text-anchor="middle">80</text><text x="466.4" y="140.8" text-anchor="middle">90</text><text x="506.4" y="140.8" text-anchor="middle">100</text><text x="546.4" y="140.8" text-anchor="middle">110</text><text x="586.4" y="140.8" text-anchor="middle">120</text><text x="626.4" y="140.8" text-anchor="middle">130</text><text x="666.4" y="140.8" text-anchor="middle">140</text><text x="706.4" y="140.8" text-anchor="middle">150</text><text x="746.4" y="140.8" text-anchor="middle">160</text><text x="786.4" y="140.8" text-anchor="middle">170</text><text x="826.4" y="140.8" text-anchor="middle">180</text><text x="866.4" y="140.8" text-anchor="middle">190</text><text x="906.4" y="140.8" text-anchor="middle">200</text><text x="946.4" y="140.8" text-anchor="middle">210</text><text x="986.4" y="140.8" text-anchor="middle">220</text><text x="1026.4" y="140.8" text-anchor="middle">230</text><text x="1066.4" y="140.8" text-anchor="middle">240</text><text x="1106.4" y="140.8" text-anchor="middle">250</text></g>
<g font-family="Liberation Sans" font-size="8.6" fill="#111" clip-path="url(#rl)"><text transform="translate(82 716) rotate(-90)" text-anchor="middle">-30</text><text transform="translate(82 676) rotate(-90)" text-anchor="middle">-20</text><text transform="translate(82 636) rotate(-90)" text-anchor="middle">-10</text><text transform="translate(82 596) rotate(-90)" text-anchor="middle">0</text><text transform="translate(82 556) rotate(-90)" text-anchor="middle">10</text><text transform="translate(82 516) rotate(-90)" text-anchor="middle">20</text><text transform="translate(82 476) rotate(-90)" text-anchor="middle">30</text><text transform="translate(82 436) rotate(-90)" text-anchor="middle">40</text><text transform="translate(82 396) rotate(-90)" text-anchor="middle">50</text><text transform="translate(82 356) rotate(-90)" text-anchor="middle">60</text><text transform="translate(82 316) rotate(-90)" text-anchor="middle">70</text><text transform="translate(82 276) rotate(-90)" text-anchor="middle">80</text><text transform="translate(82 236) rotate(-90)" text-anchor="middle">90</text><text transform="translate(82 196) rotate(-90)" text-anchor="middle">100</text><text transform="translate(82 156) rotate(-90)" text-anchor="middle">110</text></g>
<path d="M1100.5,146 L1111.5,146 L1106,152.5 Z" fill="#000"/>
<path d="M85,590.5 L91.5,596 L85,601.5 Z" fill="#000"/>
<g clip-path="url(#cv)">
<rect x="95" y="155" width="1044" height="577" fill="#000"/>
<g stroke="#2a2a2a" stroke-width="1"><line x1="106.4" y1="155" x2="106.4" y2="732"/><line x1="506.4" y1="155" x2="506.4" y2="732"/><line x1="906.4" y1="155" x2="906.4" y2="732"/><line x1="95" y1="196" x2="1139" y2="196"/><line x1="95" y1="596" x2="1139" y2="596"/></g>
<g fill="#3a3a3a"><rect x="105.9" y="715.5" width="1" height="1"/><rect x="105.9" y="675.5" width="1" height="1"/><rect x="105.9" y="635.5" width="1" height="1"/><rect x="105.9" y="595.5" width="1" height="1"/><rect x="105.9" y="555.5" width="1" height="1"/><rect x="105.9" y="515.5" width="1" height="1"/><rect x="105.9" y="475.5" width="1" height="1"/><rect x="105.9" y="435.5" width="1" height="1"/><rect x="105.9" y="395.5" width="1" height="1"/><rect x="105.9" y="355.5" width="1" height="1"/><rect x="105.9" y="315.5" width="1" height="1"/><rect x="105.9" y="275.5" width="1" height="1"/><rect x="105.9" y="235.5" width="1" height="1"/><rect x="105.9" y="195.5" width="1" height="1"/><rect x="105.9" y="155.5" width="1" height="1"/><rect x="145.9" y="715.5" width="1" height="1"/><rect x="145.9" y="675.5" width="1" height="1"/><rect x="145.9" y="635.5" width="1" height="1"/><rect x="145.9" y="595.5" width="1" height="1"/><rect x="145.9" y="555.5" width="1" height="1"/><rect x="145.9" y="515.5" width="1" height="1"/><rect x="145.9" y="475.5" width="1" height="1"/><rect x="145.9" y="435.5" width="1" height="1"/><rect x="145.9" y="395.5" width="1" height="1"/><rect x="145.9" y="355.5" width="1" height="1"/><rect x="145.9" y="315.5" width="1" height="1"/><rect x="145.9" y="275.5" width="1" height="1"/><rect x="145.9" y="235.5" width="1" height="1"/><rect x="145.9" y="195.5" width="1" height="1"/><rect x="145.9" y="155.5" width="1" height="1"/><rect x="185.9" y="715.5" width="1" height="1"/><rect x="185.9" y="675.5" width="1" height="1"/><rect x="185.9" y="635.5" width="1" height="1"/><rect x="185.9" y="595.5" width="1" height="1"/><rect x="185.9" y="555.5" width="1" height="1"/><rect x="185.9" y="515.5" width="1" height="1"/><rect x="185.9" y="475.5" width="1" height="1"/><rect x="185.9" y="435.5" width="1" height="1"/><rect x="185.9" y="395.5" width="1" height="1"/><rect x="185.9" y="355.5" width="1" height="1"/><rect x="185.9" y="315.5" width="1" height="1"/><rect x="185.9" y="275.5" width="1" height="1"/><rect x="185.9" y="235.5" width="1" height="1"/><rect x="185.9" y="195.5" width="1" height="1"/><rect x="185.9" y="155.5" width="1" height="1"/><rect x="225.9" y="715.5" width="1" height="1"/><rect x="225.9" y="675.5" width="1" height="1"/><rect x="225.9" y="635.5" width="1" height="1"/><rect x="225.9" y="595.5" width="1" height="1"/><rect x="225.9" y="555.5" width="1" height="1"/><rect x="225.9" y="515.5" width="1" height="1"/><rect x="225.9" y="475.5" width="1" height="1"/><rect x="225.9" y="435.5" width="1" height="1"/><rect x="225.9" y="395.5" width="1" height="1"/><rect x="225.9" y="355.5" width="1" height="1"/><rect x="225.9" y="315.5" width="1" height="1"/><rect x="225.9" y="275.5" width="1" height="1"/><rect x="225.9" y="235.5" width="1" height="1"/><rect x="225.9" y="195.5" width="1" height="1"/><rect x="225.9" y="155.5" width="1" height="1"/><rect x="265.9" y="715.5" width="1" height="1"/><rect x="265.9" y="675.5" width="1" height="1"/><rect x="265.9" y="635.5" width="1" height="1"/><rect x="265.9" y="595.5" width="1" height="1"/><rect x="265.9" y="555.5" width="1" height="1"/><rect x="265.9" y="515.5" width="1" height="1"/><rect x="265.9" y="475.5" width="1" height="1"/><rect x="265.9" y="435.5" width="1" height="1"/><rect x="265.9" y="395.5" width="1" height="1"/><rect x="265.9" y="355.5" width="1" height="1"/><rect x="265.9" y="315.5" width="1" height="1"/><rect x="265.9" y="275.5" width="1" height="1"/><rect x="265.9" y="235.5" width="1" height="1"/><rect x="265.9" y="195.5" width="1" height="1"/><rect x="265.9" y="155.5" width="1" height="1"/><rect x="305.9" y="715.5" width="1" height="1"/><rect x="305.9" y="675.5" width="1" height="1"/><rect x="305.9" y="635.5" width="1" height="1"/><rect x="305.9" y="595.5" width="1" height="1"/><rect x="305.9" y="555.5" width="1" height="1"/><rect x="305.9" y="515.5" width="1" height="1"/><rect x="305.9" y="475.5" width="1" height="1"/><rect x="305.9" y="435.5" width="1" height="1"/><rect x="305.9" y="395.5" width="1" height="1"/><rect x="305.9" y="355.5" width="1" height="1"/><rect x="305.9" y="315.5" width="1" height="1"/><rect x="305.9" y="275.5" width="1" height="1"/><rect x="305.9" y="235.5" width="1" height="1"/><rect x="305.9" y="195.5" width="1" height="1"/><rect x="305.9" y="155.5" width="1" height="1"/><rect x="345.9" y="715.5" width="1" height="1"/><rect x="345.9" y="675.5" width="1" height="1"/><rect x="345.9" y="635.5" width="1" height="1"/><rect x="345.9" y="595.5" width="1" height="1"/><rect x="345.9" y="555.5" width="1" height="1"/><rect x="345.9" y="515.5" width="1" height="1"/><rect x="345.9" y="475.5" width="1" height="1"/><rect x="345.9" y="435.5" width="1" height="1"/><rect x="345.9" y="395.5" width="1" height="1"/><rect x="345.9" y="355.5" width="1" height="1"/><rect x="345.9" y="315.5" width="1" height="1"/><rect x="345.9" y="275.5" width="1" height="1"/><rect x="345.9" y="235.5" width="1" height="1"/><rect x="345.9" y="195.5" width="1" height="1"/><rect x="345.9" y="155.5" width="1" height="1"/><rect x="385.9" y="715.5" width="1" height="1"/><rect x="385.9" y="675.5" width="1" height="1"/><rect x="385.9" y="635.5" width="1" height="1"/><rect x="385.9" y="595.5" width="1" height="1"/><rect x="385.9" y="555.5" width="1" height="1"/><rect x="385.9" y="515.5" width="1" height="1"/><rect x="385.9" y="475.5" width="1" height="1"/><rect x="385.9" y="435.5" width="1" height="1"/><rect x="385.9" y="395.5" width="1" height="1"/><rect x="385.9" y="355.5" width="1" height="1"/><rect x="385.9" y="315.5" width="1" height="1"/><rect x="385.9" y="275.5" width="1" height="1"/><rect x="385.9" y="235.5" width="1" height="1"/><rect x="385.9" y="195.5" width="1" height="1"/><rect x="385.9" y="155.5" width="1" height="1"/><rect x="425.9" y="715.5" width="1" height="1"/><rect x="425.9" y="675.5" width="1" height="1"/><rect x="425.9" y="635.5" width="1" height="1"/><rect x="425.9" y="595.5" width="1" height="1"/><rect x="425.9" y="555.5" width="1" height="1"/><rect x="425.9" y="515.5" width="1" height="1"/><rect x="425.9" y="475.5" width="1" height="1"/><rect x="425.9" y="435.5" width="1" height="1"/><rect x="425.9" y="395.5" width="1" height="1"/><rect x="425.9" y="355.5" width="1" height="1"/><rect x="425.9" y="315.5" width="1" height="1"/><rect x="425.9" y="275.5" width="1" height="1"/><rect x="425.9" y="235.5" width="1" height="1"/><rect x="425.9" y="195.5" width="1" height="1"/><rect x="425.9" y="155.5" width="1" height="1"/><rect x="465.9" y="715.5" width="1" height="1"/><rect x="465.9" y="675.5" width="1" height="1"/><rect x="465.9" y="635.5" width="1" height="1"/><rect x="465.9" y="595.5" width="1" height="1"/><rect x="465.9" y="555.5" width="1" height="1"/><rect x="465.9" y="515.5" width="1" height="1"/><rect x="465.9" y="475.5" width="1" height="1"/><rect x="465.9" y="435.5" width="1" height="1"/><rect x="465.9" y="395.5" width="1" height="1"/><rect x="465.9" y="355.5" width="1" height="1"/><rect x="465.9" y="315.5" width="1" height="1"/><rect x="465.9" y="275.5" width="1" height="1"/><rect x="465.9" y="235.5" width="1" height="1"/><rect x="465.9" y="195.5" width="1" height="1"/><rect x="465.9" y="155.5" width="1" height="1"/><rect x="505.9" y="715.5" width="1" height="1"/><rect x="505.9" y="675.5" width="1" height="1"/><rect x="505.9" y="635.5" width="1" height="1"/><rect x="505.9" y="595.5" width="1" height="1"/><rect x="505.9" y="555.5" width="1" height="1"/><rect x="505.9" y="515.5" width="1" height="1"/><rect x="505.9" y="475.5" width="1" height="1"/><rect x="505.9" y="435.5" width="1" height="1"/><rect x="505.9" y="395.5" width="1" height="1"/><rect x="505.9" y="355.5" width="1" height="1"/><rect x="505.9" y="315.5" width="1" height="1"/><rect x="505.9" y="275.5" width="1" height="1"/><rect x="505.9" y="235.5" width="1" height="1"/><rect x="505.9" y="195.5" width="1" height="1"/><rect x="505.9" y="155.5" width="1" height="1"/><rect x="545.9" y="715.5" width="1" height="1"/><rect x="545.9" y="675.5" width="1" height="1"/><rect x="545.9" y="635.5" width="1" height="1"/><rect x="545.9" y="595.5" width="1" height="1"/><rect x="545.9" y="555.5" width="1" height="1"/><rect x="545.9" y="515.5" width="1" height="1"/><rect x="545.9" y="475.5" width="1" height="1"/><rect x="545.9" y="435.5" width="1" height="1"/><rect x="545.9" y="395.5" width="1" height="1"/><rect x="545.9" y="355.5" width="1" height="1"/><rect x="545.9" y="315.5" width="1" height="1"/><rect x="545.9" y="275.5" width="1" height="1"/><rect x="545.9" y="235.5" width="1" height="1"/><rect x="545.9" y="195.5" width="1" height="1"/><rect x="545.9" y="155.5" width="1" height="1"/><rect x="585.9" y="715.5" width="1" height="1"/><rect x="585.9" y="675.5" width="1" height="1"/><rect x="585.9" y="635.5" width="1" height="1"/><rect x="585.9" y="595.5" width="1" height="1"/><rect x="585.9" y="555.5" width="1" height="1"/><rect x="585.9" y="515.5" width="1" height="1"/><rect x="585.9" y="475.5" width="1" height="1"/><rect x="585.9" y="435.5" width="1" height="1"/><rect x="585.9" y="395.5" width="1" height="1"/><rect x="585.9" y="355.5" width="1" height="1"/><rect x="585.9" y="315.5" width="1" height="1"/><rect x="585.9" y="275.5" width="1" height="1"/><rect x="585.9" y="235.5" width="1" height="1"/><rect x="585.9" y="195.5" width="1" height="1"/><rect x="585.9" y="155.5" width="1" height="1"/><rect x="625.9" y="715.5" width="1" height="1"/><rect x="625.9" y="675.5" width="1" height="1"/><rect x="625.9" y="635.5" width="1" height="1"/><rect x="625.9" y="595.5" width="1" height="1"/><rect x="625.9" y="555.5" width="1" height="1"/><rect x="625.9" y="515.5" width="1" height="1"/><rect x="625.9" y="475.5" width="1" height="1"/><rect x="625.9" y="435.5" width="1" height="1"/><rect x="625.9" y="395.5" width="1" height="1"/><rect x="625.9" y="355.5" width="1" height="1"/><rect x="625.9" y="315.5" width="1" height="1"/><rect x="625.9" y="275.5" width="1" height="1"/><rect x="625.9" y="235.5" width="1" height="1"/><rect x="625.9" y="195.5" width="1" height="1"/><rect x="625.9" y="155.5" width="1" height="1"/><rect x="665.9" y="715.5" width="1" height="1"/><rect x="665.9" y="675.5" width="1" height="1"/><rect x="665.9" y="635.5" width="1" height="1"/><rect x="665.9" y="595.5" width="1" height="1"/><rect x="665.9" y="555.5" width="1" height="1"/><rect x="665.9" y="515.5" width="1" height="1"/><rect x="665.9" y="475.5" width="1" height="1"/><rect x="665.9" y="435.5" width="1" height="1"/><rect x="665.9" y="395.5" width="1" height="1"/><rect x="665.9" y="355.5" width="1" height="1"/><rect x="665.9" y="315.5" width="1" height="1"/><rect x="665.9" y="275.5" width="1" height="1"/><rect x="665.9" y="235.5" width="1" height="1"/><rect x="665.9" y="195.5" width="1" height="1"/><rect x="665.9" y="155.5" width="1" height="1"/><rect x="705.9" y="715.5" width="1" height="1"/><rect x="705.9" y="675.5" width="1" height="1"/><rect x="705.9" y="635.5" width="1" height="1"/><rect x="705.9" y="595.5" width="1" height="1"/><rect x="705.9" y="555.5" width="1" height="1"/><rect x="705.9" y="515.5" width="1" height="1"/><rect x="705.9" y="475.5" width="1" height="1"/><rect x="705.9" y="435.5" width="1" height="1"/><rect x="705.9" y="395.5" width="1" height="1"/><rect x="705.9" y="355.5" width="1" height="1"/><rect x="705.9" y="315.5" width="1" height="1"/><rect x="705.9" y="275.5" width="1" height="1"/><rect x="705.9" y="235.5" width="1" height="1"/><rect x="705.9" y="195.5" width="1" height="1"/><rect x="705.9" y="155.5" width="1" height="1"/><rect x="745.9" y="715.5" width="1" height="1"/><rect x="745.9" y="675.5" width="1" height="1"/><rect x="745.9" y="635.5" width="1" height="1"/><rect x="745.9" y="595.5" width="1" height="1"/><rect x="745.9" y="555.5" width="1" height="1"/><rect x="745.9" y="515.5" width="1" height="1"/><rect x="745.9" y="475.5" width="1" height="1"/><rect x="745.9" y="435.5" width="1" height="1"/><rect x="745.9" y="395.5" width="1" height="1"/><rect x="745.9" y="355.5" width="1" height="1"/><rect x="745.9" y="315.5" width="1" height="1"/><rect x="745.9" y="275.5" width="1" height="1"/><rect x="745.9" y="235.5" width="1" height="1"/><rect x="745.9" y="195.5" width="1" height="1"/><rect x="745.9" y="155.5" width="1" height="1"/><rect x="785.9" y="715.5" width="1" height="1"/><rect x="785.9" y="675.5" width="1" height="1"/><rect x="785.9" y="635.5" width="1" height="1"/><rect x="785.9" y="595.5" width="1" height="1"/><rect x="785.9" y="555.5" width="1" height="1"/><rect x="785.9" y="515.5" width="1" height="1"/><rect x="785.9" y="475.5" width="1" height="1"/><rect x="785.9" y="435.5" width="1" height="1"/><rect x="785.9" y="395.5" width="1" height="1"/><rect x="785.9" y="355.5" width="1" height="1"/><rect x="785.9" y="315.5" width="1" height="1"/><rect x="785.9" y="275.5" width="1" height="1"/><rect x="785.9" y="235.5" width="1" height="1"/><rect x="785.9" y="195.5" width="1" height="1"/><rect x="785.9" y="155.5" width="1" height="1"/><rect x="825.9" y="715.5" width="1" height="1"/><rect x="825.9" y="675.5" width="1" height="1"/><rect x="825.9" y="635.5" width="1" height="1"/><rect x="825.9" y="595.5" width="1" height="1"/><rect x="825.9" y="555.5" width="1" height="1"/><rect x="825.9" y="515.5" width="1" height="1"/><rect x="825.9" y="475.5" width="1" height="1"/><rect x="825.9" y="435.5" width="1" height="1"/><rect x="825.9" y="395.5" width="1" height="1"/><rect x="825.9" y="355.5" width="1" height="1"/><rect x="825.9" y="315.5" width="1" height="1"/><rect x="825.9" y="275.5" width="1" height="1"/><rect x="825.9" y="235.5" width="1" height="1"/><rect x="825.9" y="195.5" width="1" height="1"/><rect x="825.9" y="155.5" width="1" height="1"/><rect x="865.9" y="715.5" width="1" height="1"/><rect x="865.9" y="675.5" width="1" height="1"/><rect x="865.9" y="635.5" width="1" height="1"/><rect x="865.9" y="595.5" width="1" height="1"/><rect x="865.9" y="555.5" width="1" height="1"/><rect x="865.9" y="515.5" width="1" height="1"/><rect x="865.9" y="475.5" width="1" height="1"/><rect x="865.9" y="435.5" width="1" height="1"/><rect x="865.9" y="395.5" width="1" height="1"/><rect x="865.9" y="355.5" width="1" height="1"/><rect x="865.9" y="315.5" width="1" height="1"/><rect x="865.9" y="275.5" width="1" height="1"/><rect x="865.9" y="235.5" width="1" height="1"/><rect x="865.9" y="195.5" width="1" height="1"/><rect x="865.9" y="155.5" width="1" height="1"/><rect x="905.9" y="715.5" width="1" height="1"/><rect x="905.9" y="675.5" width="1" height="1"/><rect x="905.9" y="635.5" width="1" height="1"/><rect x="905.9" y="595.5" width="1" height="1"/><rect x="905.9" y="555.5" width="1" height="1"/><rect x="905.9" y="515.5" width="1" height="1"/><rect x="905.9" y="475.5" width="1" height="1"/><rect x="905.9" y="435.5" width="1" height="1"/><rect x="905.9" y="395.5" width="1" height="1"/><rect x="905.9" y="355.5" width="1" height="1"/><rect x="905.9" y="315.5" width="1" height="1"/><rect x="905.9" y="275.5" width="1" height="1"/><rect x="905.9" y="235.5" width="1" height="1"/><rect x="905.9" y="195.5" width="1" height="1"/><rect x="905.9" y="155.5" width="1" height="1"/><rect x="945.9" y="715.5" width="1" height="1"/><rect x="945.9" y="675.5" width="1" height="1"/><rect x="945.9" y="635.5" width="1" height="1"/><rect x="945.9" y="595.5" width="1" height="1"/><rect x="945.9" y="555.5" width="1" height="1"/><rect x="945.9" y="515.5" width="1" height="1"/><rect x="945.9" y="475.5" width="1" height="1"/><rect x="945.9" y="435.5" width="1" height="1"/><rect x="945.9" y="395.5" width="1" height="1"/><rect x="945.9" y="355.5" width="1" height="1"/><rect x="945.9" y="315.5" width="1" height="1"/><rect x="945.9" y="275.5" width="1" height="1"/><rect x="945.9" y="235.5" width="1" height="1"/><rect x="945.9" y="195.5" width="1" height="1"/><rect x="945.9" y="155.5" width="1" height="1"/><rect x="985.9" y="715.5" width="1" height="1"/><rect x="985.9" y="675.5" width="1" height="1"/><rect x="985.9" y="635.5" width="1" height="1"/><rect x="985.9" y="595.5" width="1" height="1"/><rect x="985.9" y="555.5" width="1" height="1"/><rect x="985.9" y="515.5" width="1" height="1"/><rect x="985.9" y="475.5" width="1" height="1"/><rect x="985.9" y="435.5" width="1" height="1"/><rect x="985.9" y="395.5" width="1" height="1"/><rect x="985.9" y="355.5" width="1" height="1"/><rect x="985.9" y="315.5" width="1" height="1"/><rect x="985.9" y="275.5" width="1" height="1"/><rect x="985.9" y="235.5" width="1" height="1"/><rect x="985.9" y="195.5" width="1" height="1"/><rect x="985.9" y="155.5" width="1" height="1"/><rect x="1025.9" y="715.5" width="1" height="1"/><rect x="1025.9" y="675.5" width="1" height="1"/><rect x="1025.9" y="635.5" width="1" height="1"/><rect x="1025.9" y="595.5" width="1" height="1"/><rect x="1025.9" y="555.5" width="1" height="1"/><rect x="1025.9" y="515.5" width="1" height="1"/><rect x="1025.9" y="475.5" width="1" height="1"/><rect x="1025.9" y="435.5" width="1" height="1"/><rect x="1025.9" y="395.5" width="1" height="1"/><rect x="1025.9" y="355.5" width="1" height="1"/><rect x="1025.9" y="315.5" width="1" height="1"/><rect x="1025.9" y="275.5" width="1" height="1"/><rect x="1025.9" y="235.5" width="1" height="1"/><rect x="1025.9" y="195.5" width="1" height="1"/><rect x="1025.9" y="155.5" width="1" height="1"/><rect x="1065.9" y="715.5" width="1" height="1"/><rect x="1065.9" y="675.5" width="1" height="1"/><rect x="1065.9" y="635.5" width="1" height="1"/><rect x="1065.9" y="595.5" width="1" height="1"/><rect x="1065.9" y="555.5" width="1" height="1"/><rect x="1065.9" y="515.5" width="1" height="1"/><rect x="1065.9" y="475.5" width="1" height="1"/><rect x="1065.9" y="435.5" width="1" height="1"/><rect x="1065.9" y="395.5" width="1" height="1"/><rect x="1065.9" y="355.5" width="1" height="1"/><rect x="1065.9" y="315.5" width="1" height="1"/><rect x="1065.9" y="275.5" width="1" height="1"/><rect x="1065.9" y="235.5" width="1" height="1"/><rect x="1065.9" y="195.5" width="1" height="1"/><rect x="1065.9" y="155.5" width="1" height="1"/><rect x="1105.9" y="715.5" width="1" height="1"/><rect x="1105.9" y="675.5" width="1" height="1"/><rect x="1105.9" y="635.5" width="1" height="1"/><rect x="1105.9" y="595.5" width="1" height="1"/><rect x="1105.9" y="555.5" width="1" height="1"/><rect x="1105.9" y="515.5" width="1" height="1"/><rect x="1105.9" y="475.5" width="1" height="1"/><rect x="1105.9" y="435.5" width="1" height="1"/><rect x="1105.9" y="395.5" width="1" height="1"/><rect x="1105.9" y="355.5" width="1" height="1"/><rect x="1105.9" y="315.5" width="1" height="1"/><rect x="1105.9" y="275.5" width="1" height="1"/><rect x="1105.9" y="235.5" width="1" height="1"/><rect x="1105.9" y="195.5" width="1" height="1"/><rect x="1105.9" y="155.5" width="1" height="1"/></g>
<path d="M1111.6,262.6 L13.1,348.9 L60.1,946.6 L1158.6,860.6 Z" fill="#fefefe" stroke="#d08080" stroke-width="0.8"/>
<g stroke="#efefef" stroke-width="1"><line x1="106.4" y1="340" x2="106.4" y2="732"/><line x1="506.4" y1="310" x2="506.4" y2="732"/><line x1="906.4" y1="280" x2="906.4" y2="732"/><line x1="95" y1="596" x2="1139" y2="596"/></g>
<defs><filter id="wg" x="0" y="0" width="100%" height="100%" color-interpolation-filters="sRGB"><feTurbulence type="fractalNoise" baseFrequency="0.01 0.45" numOctaves="3" seed="5" result="n"/><feColorMatrix in="n" type="matrix" values="0 0 0 0 0.52  0 0 0 0 0.29  0 0 0 0 0.13  4 0 0 0 -2.2"/></filter><filter id="st" x="0" y="0" width="100%" height="100%" color-interpolation-filters="sRGB"><feTurbulence type="fractalNoise" baseFrequency="0.6" numOctaves="2" seed="2" result="n"/><feColorMatrix in="n" type="matrix" values="0 0 0 0 0.15  0 0 0 0 0.15  0 0 0 0 0.13  2.6 0 0 0 -1.2"/></filter><filter id="st2" x="0" y="0" width="100%" height="100%" color-interpolation-filters="sRGB"><feTurbulence type="fractalNoise" baseFrequency="0.5" numOctaves="2" seed="9" result="n"/><feColorMatrix in="n" type="matrix" values="0 0 0 0 1  0 0 0 0 1  0 0 0 0 0.97  2.4 0 0 0 -1.25"/></filter><filter id="blur05"><feGaussianBlur stdDeviation="0.6"/></filter><filter id="blur1"><feGaussianBlur stdDeviation="1.2"/></filter><filter id="blur3"><feGaussianBlur stdDeviation="3"/></filter></defs>
<clipPath id="headcl"><path d="M108.9,639 L107.5,597.0 C107.8,590.8 107.7,572.3 109.0,560.0 C110.3,547.7 112.6,534.0 115.3,523.0 C118.0,512.0 120.9,503.2 125.0,494.0 C129.1,484.8 133.7,476.3 140.0,468.0 C146.3,459.7 153.6,453.2 163.0,444.0 C172.4,434.8 185.2,422.0 196.3,413.0 C207.4,404.0 218.4,397.2 229.5,390.0 C240.6,382.8 251.6,375.8 262.7,370.0 C273.8,364.2 288.4,358.2 295.8,355.0 C303.2,351.8 305.5,351.5 307.4,350.8 C311,350 314,353 314,358 L314.9,378 C314.5,380.5 313.5,382 312.4,383 C306.9,385.8 290.4,393.0 279.3,399.7 C268.2,406.4 255.5,415.3 246.1,423.0 C236.7,430.7 229.3,437.7 222.9,446.0 C216.5,454.3 211.6,465.4 207.9,472.7 C204.2,480.0 202.2,483.9 201.0,490.0 C199.8,496.1 199.4,503.6 200.4,509.5 C201.4,515.4 203.2,521.2 206.9,525.1 C210.6,529.0 215.4,531.0 222.6,533.0 C229.8,535.0 240.4,535.9 250.0,537.0 C259.6,538.1 275.0,539.1 280.0,539.5 C282,540 283.5,542 284,546 L287,645 C287,648.5 283,650.4 278.8,650.4 L226,656 C214,658 206,664 202,675 C198,690 201,710 212,731 L129,731 C130,712 129,692 127,678 C120,664 110,652 108.9,639 Z"/></clipPath>
<path d="M108.9,639 L107.5,597.0 C107.8,590.8 107.7,572.3 109.0,560.0 C110.3,547.7 112.6,534.0 115.3,523.0 C118.0,512.0 120.9,503.2 125.0,494.0 C129.1,484.8 133.7,476.3 140.0,468.0 C146.3,459.7 153.6,453.2 163.0,444.0 C172.4,434.8 185.2,422.0 196.3,413.0 C207.4,404.0 218.4,397.2 229.5,390.0 C240.6,382.8 251.6,375.8 262.7,370.0 C273.8,364.2 288.4,358.2 295.8,355.0 C303.2,351.8 305.5,351.5 307.4,350.8 C311,350 314,353 314,358 L314.9,378 C314.5,380.5 313.5,382 312.4,383 C306.9,385.8 290.4,393.0 279.3,399.7 C268.2,406.4 255.5,415.3 246.1,423.0 C236.7,430.7 229.3,437.7 222.9,446.0 C216.5,454.3 211.6,465.4 207.9,472.7 C204.2,480.0 202.2,483.9 201.0,490.0 C199.8,496.1 199.4,503.6 200.4,509.5 C201.4,515.4 203.2,521.2 206.9,525.1 C210.6,529.0 215.4,531.0 222.6,533.0 C229.8,535.0 240.4,535.9 250.0,537.0 C259.6,538.1 275.0,539.1 280.0,539.5 C282,540 283.5,542 284,546 L287,645 C287,648.5 283,650.4 278.8,650.4 L226,656 C214,658 206,664 202,675 C198,690 201,710 212,731 L129,731 C130,712 129,692 127,678 C120,664 110,652 108.9,639 Z" fill="url(#steel)"/>
<g clip-path="url(#headcl)">
<defs><linearGradient id="clawg" gradientUnits="userSpaceOnUse" x1="130" y1="520" x2="310" y2="355"><stop offset="0" stop-color="#aca89f"/><stop offset="0.5" stop-color="#a9a59d"/><stop offset="1" stop-color="#a19d95"/></linearGradient></defs>
<path d="M118.0,523.0 C119.2,518.2 121.3,503.2 125.0,494.0 C128.7,484.8 133.7,476.3 140.0,468.0 C146.3,459.7 153.6,453.2 163.0,444.0 C172.4,434.8 185.2,422.0 196.3,413.0 C207.4,404.0 218.4,397.2 229.5,390.0 C240.6,382.8 251.6,375.8 262.7,370.0 C273.8,364.2 288.4,358.2 295.8,355.0 C303.2,351.8 305.5,351.5 307.4,350.8 C311,350 314,353 314,356 L309.1,355.8  C304.1,358.7 289.8,366.7 279.3,373.2 C268.8,379.7 255.8,387.2 246.1,394.7 C236.4,402.2 228.1,410.0 221.2,418.0 C214.3,426.0 208.8,435.1 204.6,442.8 C200.4,450.5 198.4,457.4 196.3,464.4 C194.2,471.4 193.1,479.1 192.0,485.0 C190.9,490.9 189.8,494.6 189.5,500.0 C189.2,505.4 189.9,514.4 190.0,517.3 L185,535 L165,590 L110,590 Z" fill="url(#clawg)" filter="url(#blur1)"/>
<path d="M118.0,523.0 C119.2,518.2 121.3,503.2 125.0,494.0 C128.7,484.8 133.7,476.3 140.0,468.0 C146.3,459.7 153.6,453.2 163.0,444.0 C172.4,434.8 185.2,422.0 196.3,413.0 C207.4,404.0 218.4,397.2 229.5,390.0 C240.6,382.8 251.6,375.8 262.7,370.0 C273.8,364.2 288.4,358.2 295.8,355.0 C303.2,351.8 305.5,351.5 307.4,350.8" fill="none" stroke="#7e7a74" stroke-width="2" opacity="0.6"/>
<path d="M309.1,355.8 C304.1,358.7 289.8,366.7 279.3,373.2 C268.8,379.7 255.8,387.2 246.1,394.7 C236.4,402.2 228.1,410.0 221.2,418.0 C214.3,426.0 208.8,435.1 204.6,442.8 C200.4,450.5 198.4,457.4 196.3,464.4 C194.2,471.4 193.1,479.1 192.0,485.0 C190.9,490.9 189.8,494.6 189.5,500.0 C189.2,505.4 188.8,512.2 190.0,517.3 C191.2,522.3 191.9,526.8 196.5,530.3 C201.1,533.8 208.4,536.6 217.3,538.2 C226.2,539.8 239.6,539.6 250.0,540.0 C260.4,540.4 275.0,540.7 280.0,540.8 L290,541 L290,530 L320,380 L316,357 Z" fill="#6c6a65"/>
<path d="M309.1,355.8 C304.1,358.7 289.8,366.7 279.3,373.2 C268.8,379.7 255.8,387.2 246.1,394.7 C236.4,402.2 228.1,410.0 221.2,418.0 C214.3,426.0 208.8,435.1 204.6,442.8 C200.4,450.5 198.4,457.4 196.3,464.4 C194.2,471.4 193.1,479.1 192.0,485.0 C190.9,490.9 189.8,494.6 189.5,500.0 C189.2,505.4 188.8,512.2 190.0,517.3 C191.2,522.3 191.9,526.8 196.5,530.3 C201.1,533.8 208.4,536.6 217.3,538.2 C226.2,539.8 239.6,539.6 250.0,540.0 C260.4,540.4 275.0,540.7 280.0,540.8" fill="none" stroke="#3d3b37" stroke-width="1.5"/>
<path d="M314.0,368.0 C310.0,370.0 298.7,375.2 290.0,380.0 C281.3,384.8 270.7,391.0 262.0,397.0 C253.3,403.0 245.0,409.3 238.0,416.0 C231.0,422.7 225.2,429.7 220.0,437.0 C214.8,444.3 210.5,452.5 207.0,460.0 C203.5,467.5 201.0,474.8 199.0,482.0 C197.0,489.2 195.3,496.7 195.0,503.0 C194.7,509.3 195.3,515.7 197.0,520.0 C198.7,524.3 200.3,526.5 205.0,529.0 C209.7,531.5 212.2,533.2 225.0,535.0 C237.8,536.8 272.5,539.0 282.0,539.8" fill="none" stroke="#46443f" stroke-width="1.4" opacity="0.9"/>
<path d="M100,500 L100,740 L124,740 C126,712 124,690 118,676 C112,662 108,650 108,638 L108,597 C109,570 113,545 118,520 Z" fill="#6a6863" opacity="0.7" filter="url(#blur1)"/>
<path d="M274,548 L292,546 L292,650 L274,648 Z" fill="#55554f" opacity="0.7" filter="url(#blur3)"/>
<path d="M284.6,546 L287,647" stroke="#3a3a35" stroke-width="3"/>
<path d="M279,541 C283,542 285,544 285,548" fill="none" stroke="#3e3c38" stroke-width="2"/>
<path d="M151.8,735.0 C151.8,727.2 152.9,699.5 151.8,688.0 C150.7,676.5 146.1,669.7 145.0,666.0 L188.6,665.0 C187.9,668.8 185.7,676.3 184.5,688.0 C183.3,699.7 182.2,727.2 181.7,735.0 Z" fill="#a6a29b" opacity="0.9" filter="url(#blur1)"/>
<path d="M107.5,625.0 C107.6,629.2 106.5,643.6 108.2,650.0 C109.9,656.4 114.5,658.4 117.7,663.6 C120.9,668.8 125.2,674.9 127.2,681.3 C129.2,687.6 129.7,692.8 130.0,701.7 C130.3,710.7 129.4,729.5 129.3,735.0 L151.8,735.0 C151.8,727.2 152.9,699.5 151.8,688.0 C150.7,676.5 148.0,671.0 145.0,666.0 C142.0,661.0 139.4,662.3 134.0,658.0 C128.6,653.7 116.8,645.9 112.3,640.4 C107.8,634.9 107.9,627.6 107.0,625.0 Z" fill="#6f6c67"/>
<path d="M181.7,735.0 C182.2,727.2 183.3,699.7 184.5,688.0 C185.7,676.3 184.5,671.8 188.6,665.0 C192.7,658.2 195.4,651.1 209.0,647.0 C222.6,642.9 258.2,642.6 270.0,640.4 C281.8,638.2 278.0,640.7 280.0,634.0 C282.0,627.3 281.7,614.3 282.0,600.0 C282.3,585.7 282.0,556.7 282.0,548.0 L292.0,548.0 C292.0,565.3 293.1,635.1 292.0,652.0 C290.9,668.9 291.2,649.0 285.3,649.3 C279.4,649.6 266.0,652.1 256.7,654.0 C247.4,655.9 236.4,657.0 229.4,660.9 C222.4,664.8 217.8,670.4 214.4,677.2 C211.0,684.0 209.2,692.1 209.0,701.7 C208.8,711.3 212.3,729.5 213.0,735.0 Z" fill="#615e59"/>
<path d="M151.8,688.0 C150.7,684.3 148.0,671.0 145.0,666.0 C142.0,661.0 139.4,662.3 134.0,658.0 C128.6,653.7 116.8,645.9 112.3,640.4 C107.8,634.9 107.9,627.6 107.0,625.0" fill="none" stroke="#4e4c48" stroke-width="1" opacity="0.7"/>
<path d="M181.7,735.0 C182.2,727.2 183.3,699.7 184.5,688.0 C185.7,676.3 184.5,671.8 188.6,665.0 C192.7,658.2 195.4,651.1 209.0,647.0 C222.6,642.9 258.2,642.6 270.0,640.4 C281.8,638.2 278.0,640.7 280.0,634.0 C282.0,627.3 281.7,614.3 282.0,600.0 C282.3,585.7 282.0,556.7 282.0,548.0" fill="none" stroke="#3e3c38" stroke-width="1.4" opacity="0.8"/>
<rect x="100" y="340" width="200" height="400" filter="url(#st)" opacity="0.16"/>
<rect x="100" y="340" width="200" height="400" filter="url(#st2)" opacity="0.1"/>
</g>
<clipPath id="hcl"><path d="M287,546 C320,548 360,551 420,552 C500,552 560,547 640,542 C760,536.5 900,534 1005,531.5 L1074,528.7 C1090,528.5 1100,540 1103,557 C1106,575 1106,615 1103,637 C1100,655 1090,666 1074,666.3 C1040,664 1010,661 920,657 C850,656 760,657 690,657.7 C640,655 600,648 540,645 C470,643 400,645 340,646 C320,647 300,649 287,650 Z"/></clipPath>
<path d="M287,546 C320,548 360,551 420,552 C500,552 560,547 640,542 C760,536.5 900,534 1005,531.5 L1074,528.7 C1090,528.5 1100,540 1103,557 C1106,575 1106,615 1103,637 C1100,655 1090,666 1074,666.3 C1040,664 1010,661 920,657 C850,656 760,657 690,657.7 C640,655 600,648 540,645 C470,643 400,645 340,646 C320,647 300,649 287,650 Z" fill="url(#woodX)"/>
<g clip-path="url(#hcl)">
<rect x="287" y="520" width="820" height="150" fill="url(#woodV)"/>
<rect x="287" y="520" width="820" height="150" filter="url(#wg)"/>
<path d="M1050,520 C1080,530 1092,560 1093,597 C1093,635 1080,662 1050,672 L1110,672 L1110,520 Z" fill="#5a2e10" opacity="0.45" filter="url(#blur3)"/>
<path d="M287,540 L302,540 L302,660 L287,660 Z" fill="#7a4a25" opacity="0.06"/><path d="M302,548 L302.5,650" stroke="#7a4a28" stroke-width="1" opacity="0.35"/>
</g>
<g stroke="#ff7070" stroke-width="1.2" opacity="0.85"><line x1="95" y1="596" x2="127" y2="596"/><line x1="107" y1="576" x2="107" y2="616"/></g>
<line x1="1109" y1="596" x2="1139" y2="596" stroke="#e8e8e8" stroke-width="1"/>
<circle cx="1107" cy="597" r="4" fill="none" stroke="#ff4040" stroke-width="1" opacity="0.8"/><line x1="1103" y1="597" x2="1111" y2="597" stroke="#ff4040" stroke-width="0.8" opacity="0.6"/>
<rect x="1106.8" y="257" width="9.5" height="9.5" fill="#0a1ea8" stroke="#04106a" stroke-width="1"/>
</g>
<rect x="1139" y="155" width="16" height="593" fill="#f7f7f7"/><line x1="1139.5" y1="155" x2="1139.5" y2="732" stroke="#e8e8e8"/><line x1="1153.5" y1="131" x2="1153.5" y2="748" stroke="#e2e2e2"/>
<rect x="1143.5" y="278" width="7.5" height="234" rx="3.75" fill="#808080"/>
<rect x="95" y="732" width="1044" height="14" fill="#f4f4f4"/>
<rect x="72" y="732" width="23" height="14" fill="#ebebeb"/>
<rect x="331.5" y="735.5" width="536" height="8" rx="4" fill="#808080"/>
<rect x="1083" y="732" width="72" height="16" fill="#ebebeb"/>
<text x="1153" y="745" font-family="Liberation Sans" font-size="12.5" fill="#111" text-anchor="end">10 &lt; 100</text>
<g fill="none" filter="url(#blur05)"><circle cx="1106.4" cy="595.8" r="37.8" stroke="#9fb4c8" stroke-width="2.4" opacity="0.75"/><circle cx="1106.4" cy="595.8" r="35.3" stroke="#a8bccf" stroke-width="2" opacity="0.6"/><circle cx="1106.4" cy="595.8" r="33" stroke="#c4d2de" stroke-width="2" opacity="0.5"/></g>
<path transform="translate(1106.5 596.5) scale(1.14) translate(-1106.5 -596.5)" d="M1106.5,596.5 L1106.5,616.5 L1111,612 L1114.5,620 L1117.5,618.5 L1114,611 L1120.5,611 Z" fill="#fff" stroke="#111" stroke-width="1.05" stroke-linejoin="round"/>
</svg><!--/CANVAS-->
<!--REST--><svg class="a" style="left:72px;top:746px" width="1083" height="52" viewBox="72 746 1083 52">
<rect x="72" y="746" width="1083" height="52" fill="#ebebeb"/>
<rect x="72" y="748" width="1083" height="2" fill="#c4c4c4"/>
<rect x="72.5" y="750" width="1081" height="20.5" fill="#fff"/>
<rect x="72" y="770.3" width="1083" height="1.2" fill="#c6c6c6"/>
<rect x="1138.7" y="750" width="14" height="20.3" fill="#f7f7f7"/>
<rect x="1142.2" y="750" width="7.8" height="16.7" rx="3.9" fill="#808080"/>
<rect x="1153.3" y="746" width="1.7" height="52" fill="#e2e2e2"/>
<text x="77" y="762.3" font-family="Liberation Sans" font-size="13.6" fill="#1414d8"><tspan font-style="italic">Commande:</tspan> snapgrid</text>
<text x="73" y="790" font-family="Liberation Sans" font-size="13.5" fill="#111">Commande :</text>
<rect x="152.8" y="776" width="974.5" height="18.4" fill="#fff"/>
<rect x="1127.5" y="772.5" width="25" height="24.8" fill="#ebebeb" stroke="#c2c2c2" stroke-width="1"/>
<rect x="1133.5" y="780.5" width="13.3" height="9.3" fill="#f2f2f2" stroke="#333" stroke-width="1"/>
<rect x="1133" y="780" width="14.3" height="2.8" fill="#000"/>
</svg>
<svg class="a" style="left:0;top:798px" width="1500" height="46" viewBox="0 798 1500 46">
<rect x="0" y="798" width="1500" height="46" fill="#dcdcdc"/>
<rect x="0" y="798" width="1500" height="1.5" fill="#cbcbcb"/>
<g font-family="Liberation Sans" font-size="10.4" fill="#111">
<text x="2" y="815.8">249.75,0</text>
<text x="2" y="835.8">@-0.25,0</text>
<text x="256" y="815.8">249.75&lt;0°</text>
<text x="256" y="835.8">@0.25&lt;180°</text>
<text x="698.4" y="819.7" text-anchor="end">Sélectionne une entité ou une région</text>
<text x="698.4" y="830.6" text-anchor="end">Déplacer l’entité ou la référence</text>
<text x="949" y="819.6">Entités sélectionnées :</text>
<text x="949" y="830.9">1 Image sur calque "Image".</text>
</g>
<line x1="254.5" y1="802" x2="254.5" y2="842" stroke="#777" stroke-width="1"/>
<g fill="#c9c9c9"><circle cx="509.5" cy="822" r="3"/><circle cx="943.2" cy="822" r="3"/><circle cx="1272" cy="822" r="3"/></g>
<path d="M726,806 C731.5,806 734.5,810 734.5,816 L734.5,826 C734.5,832 731.5,835.3 726,835.3 C720.5,835.3 717.5,832 717.5,826 L717.5,816 C717.5,810 720.5,806 726,806 Z" fill="#fff" stroke="#333" stroke-width="0.9"/>
<path d="M717.5,819 C722,817.5 730,817.5 734.5,819" fill="none" stroke="#333" stroke-width="0.9"/>
<rect x="724.6" y="807.5" width="2.8" height="8" rx="1.4" fill="#fff" stroke="#333" stroke-width="0.7"/>
</svg>
<svg class="a" style="left:1155px;top:108px" width="345" height="690" viewBox="1155 108 345 690">
<defs>
<linearGradient id="lbh" x1="0" y1="0" x2="0" y2="1"><stop offset="0" stop-color="#f6f6f6"/><stop offset="0.2" stop-color="#e8e8e8"/><stop offset="1" stop-color="#f4f4f4"/></linearGradient>
<linearGradient id="dockg" x1="0" y1="0" x2="1" y2="0"><stop offset="0" stop-color="#f2f2f2"/><stop offset="0.93" stop-color="#d2d2d2"/><stop offset="0.95" stop-color="#c2c2c2"/><stop offset="1" stop-color="#bdbdbd"/></linearGradient>
</defs>
<rect x="1155" y="108" width="300" height="690" fill="#ececec"/>
<rect x="1155" y="108" width="300" height="1" fill="#c8c8c8"/>
<rect x="1154" y="108" width="1.2" height="690" fill="#c8c8c8"/>
<circle cx="1164" cy="118" r="7" fill="#6b6b6b"/><path d="M1161,115 L1167,121 M1167,115 L1161,121" stroke="#fff" stroke-width="1.8"/>
<circle cx="1182" cy="118" r="7" fill="#6b6b6b"/><rect x="1178" y="117" width="5.5" height="4.5" fill="none" stroke="#fff" stroke-width="1.1"/><path d="M1180.5,116.5 L1180.5,114.5 L1186,114.5 L1186,119 L1184,119" fill="none" stroke="#fff" stroke-width="1.1"/>
<text x="1322" y="123" font-family="Liberation Sans" font-size="12" fill="#2a2a2a" text-anchor="middle">Liste des calques</text>
<rect x="1155.6" y="129.5" width="299" height="27" fill="#a8a8a8"/>
<rect x="1156.6" y="130.6" width="57.8" height="25" fill="url(#lbh)"/><rect x="1216.3999999999999" y="130.6" width="57.8" height="25" fill="url(#lbh)"/><rect x="1276.1999999999998" y="130.6" width="57.8" height="25" fill="url(#lbh)"/><rect x="1336.0" y="130.6" width="57.8" height="25" fill="url(#lbh)"/><rect x="1395.8" y="130.6" width="57.8" height="25" fill="url(#lbh)"/>
<g transform="translate(1185 142.5) scale(0.95)"><path d="M-7.3,0.3 C-5,-5.8 5,-5.8 7.3,0.3 C5,5.6 -5,5.6 -7.3,0.3 Z" fill="#000"/><path d="M-5,0.8 C-3,-2.8 3,-2.8 5,0.8 C3,3.4 -3,3.4 -5,0.8 Z" fill="#eeeeee"/><circle cx="0" cy="-0.6" r="2.7" fill="#000"/></g>
<g transform="translate(1245 142.5) scale(0.95)"><path d="M-7.3,0.3 C-5,-5.8 5,-5.8 7.3,0.3 C5,5.6 -5,5.6 -7.3,0.3 Z" fill="#a8a8a8"/><path d="M-5,0.8 C-3,-2.8 3,-2.8 5,0.8 C3,3.4 -3,3.4 -5,0.8 Z" fill="#eeeeee"/><circle cx="0" cy="-0.6" r="2.7" fill="#a8a8a8"/></g>
<path d="M1299.5,142.5 L1310.5,142.5 M1305,137 L1305,148" stroke="#e00000" stroke-width="3"/>
<path d="M1359,142.5 L1371,142.5" stroke="#e00000" stroke-width="3"/>
<g transform="translate(1425 142.5) rotate(-45) scale(1.0)"><rect x="-7" y="-1.5" width="13" height="3" fill="#e8a830" stroke="#8a5a10" stroke-width="0.5"/><path d="M-7,-1.5 L-10,0 L-7,1.5 Z" fill="#f0d8a0" stroke="#6a4a10" stroke-width="0.4"/><rect x="6" y="-1.5" width="2.5" height="3" fill="#e02020"/></g>
<rect x="1156" y="157" width="297.5" height="641" fill="#fff"/>
<rect x="1161.5" y="163.5" width="15" height="8" fill="#fff" stroke="#000" stroke-width="1"/>
<text x="1183" y="171.5" font-family="Liberation Sans" font-size="13" fill="#000">0</text>
<g transform="translate(1422.9 166.5) scale(1.0)"><path d="M-7.3,0.3 C-5,-5.8 5,-5.8 7.3,0.3 C5,5.6 -5,5.6 -7.3,0.3 Z" fill="#000"/><path d="M-5,0.8 C-3,-2.8 3,-2.8 5,0.8 C3,3.4 -3,3.4 -5,0.8 Z" fill="#fff"/><circle cx="0" cy="-0.6" r="2.7" fill="#000"/></g>
<g transform="translate(1444.7 167.5)"><path d="M-3.2,-1 L-3.2,-3.5 C-3.2,-6.5 3.2,-6.5 3.2,-3.5 L3.2,-1" fill="none" stroke="#b8b8b8" stroke-width="1.4"/><rect x="-5" y="-1" width="10" height="7" fill="#b8b8b8"/></g>
<rect x="1156" y="177" width="297.5" height="20" fill="#0a48d8"/>
<rect x="1161.3" y="183.2" width="15.5" height="8.4" fill="#333a46"/>
<text x="1183" y="191.5" font-family="Liberation Sans" font-size="13" fill="#fff">Image</text>
<g transform="translate(1401.3 187) rotate(-45) scale(0.95)"><rect x="-7" y="-1.5" width="13" height="3" fill="#e8a830" stroke="#8a5a10" stroke-width="0.5"/><path d="M-7,-1.5 L-10,0 L-7,1.5 Z" fill="#f0d8a0" stroke="#6a4a10" stroke-width="0.4"/><rect x="6" y="-1.5" width="2.5" height="3" fill="#e02020"/></g>
<g transform="translate(1422.9 186.5) scale(1.0)"><path d="M-7.3,0.3 C-5,-5.8 5,-5.8 7.3,0.3 C5,5.6 -5,5.6 -7.3,0.3 Z" fill="#000"/><path d="M-5,0.8 C-3,-2.8 3,-2.8 5,0.8 C3,3.4 -3,3.4 -5,0.8 Z" fill="#0a48d8"/><circle cx="0" cy="-0.6" r="2.7" fill="#000"/></g>
<g transform="translate(1444.7 187.5)"><path d="M-3.2,-1 L-3.2,-3.5 C-3.2,-6.5 3.2,-6.5 3.2,-3.5 L3.2,-1" fill="none" stroke="#b8b8b8" stroke-width="1.4"/><rect x="-5" y="-1" width="10" height="7" fill="#b8b8b8"/></g>
<rect x="1453.5" y="108" width="1.5" height="690" fill="#d0d0d0"/>
<rect x="1455" y="108" width="45" height="690" fill="url(#dockg)"/>
<g fill="#a8a8a8"><rect x="1462" y="116" width="2" height="2"/><rect x="1468" y="116" width="2" height="2"/><rect x="1474" y="116" width="2" height="2"/><rect x="1480" y="116" width="2" height="2"/><rect x="1486" y="116" width="2" height="2"/></g>
<rect x="1456" y="120.6" width="42.3" height="41.6" rx="5" fill="#b5b5b5"/>
<rect x="1456" y="417.3" width="42.3" height="41.7" rx="5" fill="#b5b5b5"/>
<g stroke="#8a8a8a" stroke-dasharray="1 2" stroke-width="1"><line x1="1458" y1="261.5" x2="1500" y2="261.5"/><line x1="1458" y1="408.5" x2="1500" y2="408.5"/><line x1="1458" y1="512.5" x2="1500" y2="512.5"/></g>

<g transform="translate(1463 127)"><rect x="0.5" y="0.5" width="27.5" height="27" fill="#fff" stroke="#333" stroke-width="0.9"/><rect x="0" y="0" width="28.5" height="4.6" fill="#000"/><rect x="1.3" y="1" width="2.6" height="2.6" fill="#fff"/><path d="M6,11 L11,9 L11,21 L6,23 Z" fill="#888" stroke="#333" stroke-width="0.6"/><path d="M9,10 L20,6.5 L20,18.5 L9,22 Z" fill="#ddd" stroke="#333" stroke-width="0.6"/><path d="M12,11 L23,7 L23,19 L12,23 Z" fill="#f4f4f4" stroke="#333" stroke-width="0.6"/><path d="M15,18 L19,11 L20,17 Z" fill="none" stroke="#e03030" stroke-width="0.8"/></g>
<g transform="translate(1463 173.8)"><rect x="0.5" y="0.5" width="27.5" height="27" fill="#fff" stroke="#333" stroke-width="0.9"/><rect x="0" y="0" width="28.5" height="4.6" fill="#000"/><rect x="1.3" y="1" width="2.6" height="2.6" fill="#fff"/><rect x="6" y="10" width="12" height="8.5" fill="#f8eec8" stroke="#555" stroke-width="0.7"/><circle cx="16.5" cy="18.5" r="5" fill="#f8eec8" stroke="#555" stroke-width="0.7" fill-opacity="0.9"/></g>
<g transform="translate(1463 219.7)"><rect x="0.5" y="0.5" width="27.5" height="27" fill="#fff" stroke="#333" stroke-width="0.9"/><rect x="0" y="0" width="28.5" height="4.6" fill="#000"/><rect x="1.3" y="1" width="2.6" height="2.6" fill="#fff"/><rect x="6" y="9.5" width="16.5" height="12" rx="2.5" fill="#f6f6f6" stroke="#bcd0ea" stroke-width="0.9"/></g>
<g transform="translate(1463 275.2)"><rect x="0.5" y="0.5" width="27.5" height="27" fill="#fff" stroke="#333" stroke-width="0.9"/><rect x="0" y="0" width="28.5" height="4.6" fill="#000"/><rect x="1.3" y="1" width="2.6" height="2.6" fill="#fff"/><rect x="4" y="8.0" width="3.5" height="3" fill="#000"/><rect x="10" y="8.0" width="14" height="3" fill="#fff" stroke="#333" stroke-width="0.6"/><rect x="4" y="13.5" width="3.5" height="3" fill="#000"/><rect x="10" y="13.5" width="14" height="3" fill="#fff" stroke="#333" stroke-width="0.6"/><rect x="4" y="19.0" width="3.5" height="3" fill="#000"/><rect x="10" y="19.0" width="14" height="3" fill="#fff" stroke="#333" stroke-width="0.6"/></g>
<g transform="translate(1463 321.8)"><rect x="0.5" y="0.5" width="27.5" height="27" fill="#fff" stroke="#333" stroke-width="0.9"/><rect x="0" y="0" width="28.5" height="4.6" fill="#000"/><rect x="1.3" y="1" width="2.6" height="2.6" fill="#fff"/><path d="M6,9 L22,9 L15.5,17 L15.5,23 L12.5,24 L12.5,17 Z" fill="#c8c8c8" stroke="#555" stroke-width="0.7"/><ellipse cx="14" cy="9.5" rx="8" ry="1.8" fill="#e8e8e8" stroke="#555" stroke-width="0.6"/></g>
<g transform="translate(1463 368)"><rect x="0.5" y="0.5" width="27.5" height="27" fill="#fff" stroke="#333" stroke-width="0.9"/><rect x="0" y="0" width="28.5" height="4.6" fill="#000"/><rect x="1.3" y="1" width="2.6" height="2.6" fill="#fff"/><path d="M5,9 L12,12 L12,20 L5,23 Z" fill="#fff" stroke="#333" stroke-width="0.8"/><rect x="12" y="12" width="10" height="8" fill="#fff" stroke="#333" stroke-width="0.8"/><line x1="9" y1="16" x2="25" y2="16" stroke="#e08080" stroke-width="0.8" stroke-dasharray="1 1"/></g>
<g transform="translate(1463 423.8)"><rect x="0.5" y="0.5" width="27.5" height="27" fill="#fff" stroke="#333" stroke-width="0.9"/><rect x="0" y="0" width="28.5" height="4.6" fill="#000"/><rect x="1.3" y="1" width="2.6" height="2.6" fill="#fff"/><g font-family="Liberation Sans" font-size="3" fill="#444"><text x="3" y="10">Command: dn</text><text x="3" y="13.5">Command: lne</text><text x="3" y="17">Command: 10&lt;</text><text x="3" y="20.5">Command: mirror</text></g><rect x="0.5" y="22" width="27.5" height="5.5" fill="#fff" stroke="#333" stroke-width="0.6"/><text x="2" y="26.5" font-family="Liberation Sans" font-size="3.5" fill="#000">c_ comment</text></g>
<g transform="translate(1463 471.2)"><rect x="0.5" y="0.5" width="27.5" height="27" fill="#fff" stroke="#333" stroke-width="0.9"/><rect x="0" y="0" width="28.5" height="4.6" fill="#000"/><rect x="1.3" y="1" width="2.6" height="2.6" fill="#fff"/><rect x="7" y="7" width="14" height="17" rx="1" fill="#c08a3a" stroke="#7a5010" stroke-width="0.6"/><rect x="9" y="9.5" width="10" height="13" fill="#f4f4f4"/><rect x="11" y="6" width="6" height="3" fill="#888"/><g stroke="#aaa" stroke-width="0.6"><line x1="10.5" y1="13" x2="17.5" y2="13"/><line x1="10.5" y1="15.5" x2="17.5" y2="15.5"/><line x1="10.5" y1="18" x2="17.5" y2="18"/></g></g>
<g fill="none" stroke="#111" stroke-width="1.45"><path d="M1465.2,533.5 L1470.6,533.5 C1473,533.5 1474.4,535 1474.4,537.3 C1474.4,539.6 1473,541.1 1470.6,541.1 L1467.3,541.1 M1470.6,541.1 C1473,541.1 1474.4,542.8 1474.4,545.2 C1474.4,547.8 1473,549.4 1470.6,549.4 L1465.2,549.4"/><path d="M1478.5,532.3 L1478.5,549.4 L1483.4,549.4 C1487.5,549.4 1489.6,545.5 1489.6,540.9 C1489.6,536.2 1487.5,532.3 1483.4,532.3 Z"/></g>
</svg><!--/REST-->
</body></html>
